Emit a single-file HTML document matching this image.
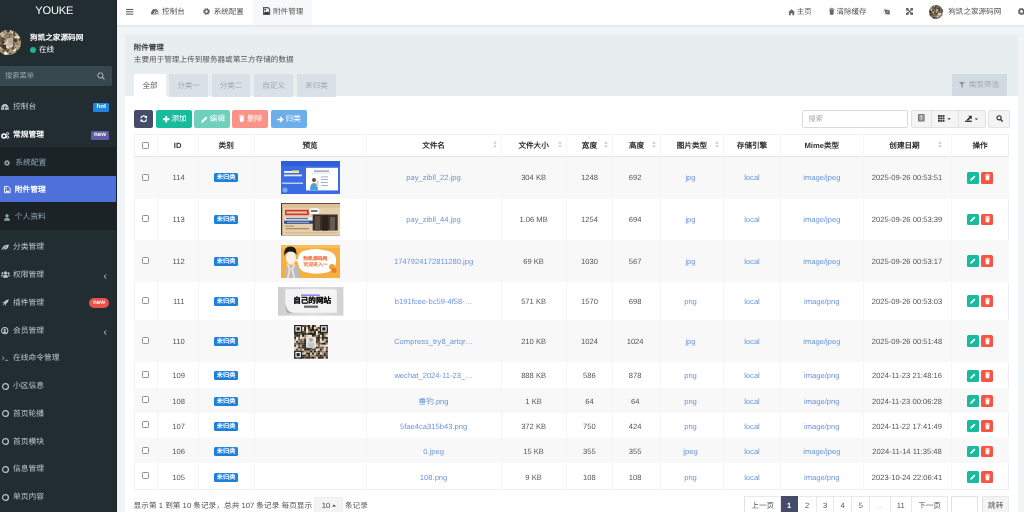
<!DOCTYPE html>
<html lang="zh-CN"><head><meta charset="utf-8"><style>
*{box-sizing:border-box;margin:0;padding:0}
html,body{width:1024px;height:512px;overflow:hidden;background:#f1f4f6;font-family:"Liberation Sans",sans-serif;color:#333;font-size:7.6px;text-rendering:geometricPrecision}
.a{position:absolute}
.t{position:absolute;white-space:nowrap;line-height:1}
svg{position:absolute;overflow:visible}
#wrap{position:absolute;left:0;top:0;width:1024px;height:512px;overflow:hidden;will-change:transform}
#sb{position:absolute;left:0;top:0;width:117px;height:512px;background:#222d32;overflow:hidden}
#hd{position:absolute;left:117px;top:0;width:907px;height:24.8px;background:#fff}
.tab{position:absolute;top:74px;height:22.5px;background:#dae1e6;color:#a3a8ac;text-align:center;line-height:23.4px;font-size:7.6px;white-space:nowrap}
.btn{position:absolute;top:110.2px;height:17.6px;border-radius:2px;color:#fff;line-height:17.6px;font-size:7.6px;white-space:nowrap}
.row{position:absolute;left:134px;width:875px;border-bottom:1px solid #ebebeb}
.c{position:absolute;top:0;height:100%;display:flex;align-items:center;justify-content:center;white-space:nowrap}
.vl{position:absolute;top:0;height:100%;width:1px;background:#f2f2f2}
.lnk{color:#6b93dc}
.lbl{display:inline-block;background:#1c80db;color:#fff;font-size:6.2px;width:23.8px;height:9px;line-height:9px;border-radius:1.5px;text-align:center;font-weight:bold}
.cb{display:inline-block;width:7.6px;height:7px;border:0.9px solid #8f8f8f;border-radius:1.3px;background:#fff;margin-left:0.4px}
.mi{position:absolute;left:0;width:117px;color:#b8c7ce;font-size:7.4px}
.mi .tx{position:absolute;left:13px;white-space:nowrap;line-height:1}
.pg{position:absolute;top:496px;height:18px;border:1px solid #e8e8e8;border-left:none;background:#fff;color:#555;text-align:center;line-height:17.6px;font-size:7.6px}
</style></head><body><div id="wrap">
<div id="sb">
<div class="t" style="left:35.2px;top:6.4px;font-size:11.1px;color:#fff;letter-spacing:-0.15px">YOUKE</div>
<svg style="left:-3.8px;top:30px" width="25" height="25" viewBox="0 0 25 25"><defs><clipPath id="avc"><circle cx="12.5" cy="12.5" r="12.5"/></clipPath></defs><g clip-path="url(#avc)"><rect width="25" height="25" fill="#a89476"/><circle cx="13.2" cy="21.2" r="1.9" fill="#a8977b"/><circle cx="3.6" cy="14.0" r="0.8" fill="#6e5c46"/><circle cx="15.4" cy="7.8" r="1.0" fill="#5b4a36"/><circle cx="10.7" cy="4.0" r="1.4" fill="#4a3a2a"/><circle cx="9.9" cy="9.4" r="1.8" fill="#8c7a60"/><circle cx="2.2" cy="11.0" r="1.0" fill="#c7b79b"/><circle cx="14.3" cy="12.0" r="1.8" fill="#e9dfcc"/><circle cx="11.4" cy="21.6" r="1.7" fill="#3f3226"/><circle cx="18.8" cy="9.1" r="1.3" fill="#6e5c46"/><circle cx="23.1" cy="7.9" r="0.8" fill="#c7b79b"/><circle cx="7.0" cy="12.7" r="1.7" fill="#3f3226"/><circle cx="17.1" cy="6.6" r="1.5" fill="#3f3226"/><circle cx="5.4" cy="10.9" r="1.9" fill="#5b4a36"/><circle cx="7.5" cy="1.6" r="2.0" fill="#d8cbb3"/><circle cx="10.5" cy="8.8" r="2.0" fill="#a8977b"/><circle cx="19.9" cy="7.5" r="1.6" fill="#5b4a36"/><circle cx="18.1" cy="12.1" r="0.9" fill="#c7b79b"/><circle cx="20.0" cy="2.6" r="1.2" fill="#c7b79b"/><circle cx="23.2" cy="17.3" r="1.2" fill="#e9dfcc"/><circle cx="13.9" cy="1.1" r="1.5" fill="#e9dfcc"/><circle cx="13.0" cy="5.5" r="1.2" fill="#6e5c46"/><circle cx="21.6" cy="4.1" r="1.1" fill="#4a3a2a"/><circle cx="13.1" cy="12.6" r="1.5" fill="#c7b79b"/><circle cx="17.1" cy="13.4" r="1.1" fill="#3f3226"/><circle cx="11.7" cy="22.5" r="1.2" fill="#a8977b"/><circle cx="23.8" cy="9.5" r="1.3" fill="#3f3226"/><circle cx="17.3" cy="7.3" r="1.6" fill="#6e5c46"/><circle cx="22.3" cy="19.9" r="1.1" fill="#4a3a2a"/><circle cx="5.7" cy="4.9" r="1.3" fill="#d8cbb3"/><circle cx="12.2" cy="18.6" r="0.8" fill="#a8977b"/><circle cx="4.7" cy="17.1" r="1.3" fill="#e9dfcc"/><circle cx="9.3" cy="10.5" r="1.4" fill="#a8977b"/><circle cx="9.6" cy="6.5" r="1.7" fill="#d8cbb3"/><circle cx="14.8" cy="12.8" r="2.0" fill="#e9dfcc"/><circle cx="12.4" cy="20.3" r="1.5" fill="#6e5c46"/><circle cx="14.5" cy="16.6" r="1.8" fill="#a8977b"/><circle cx="11.5" cy="23.3" r="1.7" fill="#c7b79b"/><circle cx="21.3" cy="14.0" r="1.2" fill="#8c7a60"/><circle cx="14.4" cy="23.3" r="1.2" fill="#5b4a36"/><circle cx="8.3" cy="3.8" r="0.9" fill="#c7b79b"/><circle cx="9.7" cy="18.3" r="1.3" fill="#5b4a36"/><circle cx="15.2" cy="9.1" r="1.7" fill="#a8977b"/><circle cx="14.3" cy="21.2" r="1.1" fill="#d8cbb3"/><circle cx="18.7" cy="18.4" r="1.2" fill="#5b4a36"/><circle cx="17.1" cy="4.8" r="1.2" fill="#d8cbb3"/><circle cx="13.8" cy="10.0" r="1.2" fill="#6e5c46"/><circle cx="16.6" cy="16.8" r="1.4" fill="#d8cbb3"/><circle cx="8.5" cy="8.1" r="1.3" fill="#6e5c46"/><circle cx="16.1" cy="10.5" r="1.4" fill="#e9dfcc"/><circle cx="17.2" cy="4.3" r="1.3" fill="#4a3a2a"/><circle cx="23.9" cy="8.8" r="0.8" fill="#5b4a36"/><circle cx="2.3" cy="15.3" r="2.0" fill="#4a3a2a"/><circle cx="1.3" cy="9.3" r="1.8" fill="#c7b79b"/><circle cx="15.9" cy="11.9" r="0.9" fill="#5b4a36"/><circle cx="20.8" cy="6.8" r="1.9" fill="#5b4a36"/><circle cx="19.8" cy="7.2" r="1.4" fill="#e9dfcc"/><circle cx="18.5" cy="18.2" r="1.6" fill="#5b4a36"/><circle cx="5.2" cy="11.4" r="0.9" fill="#6e5c46"/><circle cx="21.2" cy="21.2" r="1.4" fill="#4a3a2a"/><circle cx="13.8" cy="6.0" r="0.9" fill="#5b4a36"/><circle cx="15.2" cy="10.2" r="1.8" fill="#5b4a36"/><circle cx="22.2" cy="7.3" r="1.4" fill="#e9dfcc"/><circle cx="6.0" cy="9.4" r="1.1" fill="#d8cbb3"/><circle cx="6.3" cy="6.8" r="1.4" fill="#e9dfcc"/><circle cx="12.5" cy="12.2" r="1.7" fill="#e9dfcc"/><circle cx="14.5" cy="13.1" r="2.0" fill="#f3ede2"/><circle cx="14.3" cy="10.2" r="1.4" fill="#4a3a2a"/><circle cx="13.9" cy="14.6" r="1.6" fill="#3f3226"/><circle cx="6.7" cy="9.0" r="2.0" fill="#5b4a36"/><circle cx="9.2" cy="14.1" r="1.7" fill="#e9dfcc"/><circle cx="10.5" cy="14.4" r="0.9" fill="#8c7a60"/><circle cx="3.1" cy="14.9" r="1.3" fill="#4a3a2a"/><circle cx="15.5" cy="3.6" r="0.9" fill="#3f3226"/><circle cx="5.1" cy="4.9" r="1.3" fill="#a8977b"/><circle cx="9.8" cy="5.1" r="1.1" fill="#5b4a36"/><circle cx="11.4" cy="21.5" r="1.1" fill="#3f3226"/><circle cx="13.5" cy="13.6" r="1.2" fill="#a8977b"/><circle cx="21.2" cy="6.0" r="0.9" fill="#d8cbb3"/><circle cx="8.1" cy="1.3" r="1.8" fill="#4a3a2a"/><circle cx="7.4" cy="3.5" r="1.4" fill="#6e5c46"/><circle cx="16.4" cy="3.0" r="1.0" fill="#f3ede2"/><circle cx="12.8" cy="10.6" r="1.5" fill="#c7b79b"/><circle cx="8.7" cy="6.7" r="1.2" fill="#e9dfcc"/><circle cx="13.3" cy="11.4" r="1.6" fill="#c7b79b"/><circle cx="18.8" cy="2.1" r="1.2" fill="#6e5c46"/><circle cx="23.1" cy="19.1" r="1.4" fill="#6e5c46"/><circle cx="11.8" cy="9.3" r="1.9" fill="#c7b79b"/><circle cx="18.4" cy="14.9" r="1.0" fill="#6e5c46"/><circle cx="23.5" cy="18.3" r="1.3" fill="#5b4a36"/><circle cx="8.8" cy="1.0" r="1.2" fill="#d8cbb3"/><circle cx="7.2" cy="16.5" r="2.0" fill="#3f3226"/><circle cx="8.8" cy="16.2" r="1.8" fill="#3f3226"/><circle cx="19.7" cy="11.0" r="1.7" fill="#6e5c46"/><circle cx="8.6" cy="5.0" r="1.0" fill="#f3ede2"/><circle cx="3.0" cy="19.3" r="0.9" fill="#8c7a60"/><circle cx="12.4" cy="0.6" r="1.9" fill="#4a3a2a"/><circle cx="2.7" cy="6.6" r="1.1" fill="#8c7a60"/><circle cx="15.3" cy="21.1" r="1.9" fill="#a8977b"/><circle cx="17.6" cy="5.6" r="1.6" fill="#d8cbb3"/><circle cx="18.1" cy="5.3" r="1.5" fill="#6e5c46"/><circle cx="12.0" cy="17.5" r="1.1" fill="#e9dfcc"/><circle cx="14.1" cy="8.0" r="1.2" fill="#6e5c46"/><circle cx="7.8" cy="22.1" r="1.3" fill="#8c7a60"/><circle cx="9.2" cy="2.9" r="1.4" fill="#5b4a36"/><circle cx="18.1" cy="2.9" r="0.8" fill="#4a3a2a"/><circle cx="15.1" cy="12.4" r="1.7" fill="#3f3226"/><circle cx="13.9" cy="11.2" r="1.9" fill="#5b4a36"/><circle cx="6.1" cy="3.9" r="2.0" fill="#c7b79b"/><circle cx="15.7" cy="8.3" r="1.7" fill="#5b4a36"/><circle cx="18.6" cy="19.6" r="1.9" fill="#e9dfcc"/><circle cx="12.1" cy="24.0" r="1.0" fill="#a8977b"/><circle cx="21.7" cy="18.4" r="0.9" fill="#c7b79b"/><circle cx="15.5" cy="7.3" r="1.3" fill="#a8977b"/><circle cx="11.9" cy="6.0" r="1.2" fill="#e9dfcc"/><circle cx="5.0" cy="15.7" r="1.6" fill="#5b4a36"/><circle cx="12.1" cy="4.4" r="1.5" fill="#8c7a60"/><circle cx="16.7" cy="16.4" r="0.9" fill="#3f3226"/><circle cx="21.5" cy="4.8" r="1.4" fill="#c7b79b"/><circle cx="9.5" cy="3.1" r="1.7" fill="#a8977b"/><circle cx="9.7" cy="22.0" r="0.9" fill="#d8cbb3"/><circle cx="18.6" cy="10.3" r="1.4" fill="#6e5c46"/><circle cx="18.7" cy="17.8" r="0.9" fill="#a8977b"/><circle cx="9.7" cy="22.4" r="1.6" fill="#8c7a60"/><circle cx="12.0" cy="8.5" r="1.9" fill="#a8977b"/><circle cx="10.5" cy="9.6" r="1.0" fill="#4a3a2a"/><circle cx="7.5" cy="21.5" r="1.3" fill="#6e5c46"/><circle cx="11.1" cy="16.8" r="1.2" fill="#f3ede2"/><circle cx="13.6" cy="14.7" r="1.7" fill="#8c7a60"/><circle cx="2.4" cy="9.7" r="0.9" fill="#a8977b"/><circle cx="12.2" cy="14.6" r="0.9" fill="#8c7a60"/><circle cx="7.1" cy="12.3" r="1.2" fill="#4a3a2a"/><circle cx="8.9" cy="18.8" r="1.8" fill="#4a3a2a"/><circle cx="20.0" cy="16.0" r="1.0" fill="#c7b79b"/><circle cx="4.1" cy="7.2" r="1.7" fill="#6e5c46"/><circle cx="11.9" cy="8.0" r="1.5" fill="#5b4a36"/><circle cx="9.1" cy="6.3" r="1.5" fill="#8c7a60"/><circle cx="16.9" cy="18.2" r="1.5" fill="#5b4a36"/><circle cx="14.6" cy="16.4" r="1.2" fill="#d8cbb3"/><circle cx="9.5" cy="23.4" r="1.9" fill="#f3ede2"/><circle cx="19.2" cy="10.3" r="1.9" fill="#4a3a2a"/><rect x="10" y="8" width="7" height="9" fill="#d9d0c2" opacity="0.7"/></g></svg>
<div class="t" style="left:30.1px;top:33.8px;font-size:7.6px;color:#fff;font-weight:bold">狗凯之家源码网</div>
<div class="a" style="left:29.9px;top:46.6px;width:6.2px;height:6.2px;border-radius:50%;background:#1fb38f"></div>
<div class="t" style="left:38.9px;top:45.6px;font-size:7.6px;color:#fff">在线</div>
<div class="a" style="left:0;top:66px;width:112px;height:19.8px;background:#374850;border-radius:0 2px 2px 0"></div>
<div class="t" style="left:4.9px;top:72.2px;font-size:7.3px;color:#98a6ad">搜索菜单</div>
<svg style="left:97px;top:72.3px" width="8" height="8" viewBox="0 0 8 8"><circle cx="3.4" cy="3.4" r="2.6" fill="none" stroke="#b4bfc4" stroke-width="1"/><line x1="5.3" y1="5.3" x2="7.4" y2="7.4" stroke="#b4bfc4" stroke-width="1.1"/></svg>
<div class="a" style="left:0;top:147.2px;width:117px;height:83.2px;background:#1c2327"></div>
<div class="a" style="left:0;top:176.2px;width:117px;height:25.6px;background:#4e70db"></div>
<div class="t" style="left:12.9px;top:103.39px;font-size:7.75px;color:#b8c7ce;">控制台</div>
<svg style="left:1.4px;top:104.1px" width="7.8" height="6" viewBox="0 0 7.8 6"><path d="M0 5.8 Q0 0 3.9 0 Q7.8 0 7.8 5.8 Z" fill="#b8c7ce"/><line x1="3.3" y1="5.4" x2="4.3" y2="1.8" stroke="#222d32" stroke-width="1.1"/><circle cx="1.6" cy="3.6" r="0.5" fill="#222d32"/><circle cx="6.2" cy="3.6" r="0.5" fill="#222d32"/></svg>
<div class="t" style="left:12.9px;top:131.39px;font-size:7.75px;color:#fff;font-weight:bold;">常规管理</div>
<svg style="left:1.2px;top:131.9px" width="8.2" height="6.6" viewBox="0 0 8.2 6.6"><circle cx="2.9" cy="3.9" r="2" fill="none" stroke="#fff" stroke-width="1.5"/><circle cx="6.6" cy="1.6" r="1.1" fill="none" stroke="#fff" stroke-width="0.9"/><circle cx="6.6" cy="5.2" r="1.1" fill="none" stroke="#fff" stroke-width="0.9"/></svg>
<div class="t" style="left:15.2px;top:159.09px;font-size:7.75px;color:#8aa4af;">系统配置</div>
<svg style="left:4.2px;top:160.0px" width="6" height="6" viewBox="0 0 8 8"><circle cx="4" cy="4" r="2.3" fill="none" stroke="#8aa4af" stroke-width="2"/><circle cx="4" cy="4" r="3.4" fill="none" stroke="#8aa4af" stroke-width="1.3" stroke-dasharray="1.3 1.35"/></svg>
<div class="t" style="left:14.7px;top:185.59px;font-size:7.75px;color:#fff;font-weight:bold;">附件管理</div>
<svg style="left:3.8px;top:185.9px" width="6.6" height="7.2" viewBox="0 0 6.6 7.2"><path d="M0.45 0.45 H4.3 L6.15 2.3 V6.75 H0.45 Z" fill="none" stroke="#fff" stroke-width="0.9"/><path d="M1.1 6.2 L2.7 4.2 L3.7 5.1 L4.4 4.5 L5.5 6.2 Z" fill="#fff"/><circle cx="2.2" cy="2.6" r="0.8" fill="#fff"/></svg>
<div class="t" style="left:14.7px;top:213.39px;font-size:7.75px;color:#8aa4af;">个人资料</div>
<svg style="left:4.4px;top:213.9px" width="6" height="6.8" viewBox="0 0 6 6.8"><circle cx="3" cy="1.8" r="1.7" fill="#8aa4af"/><path d="M0 6.8 Q0.1 3.8 3 3.8 Q5.9 3.8 6 6.8 Z" fill="#8aa4af"/></svg>
<div class="t" style="left:12.9px;top:243.09px;font-size:7.75px;color:#b8c7ce;">分类管理</div>
<svg style="left:1.2px;top:243.6px" width="8" height="6.8" viewBox="0 0 8 6.8"><path d="M0.5 6.3 Q1.2 0.6 7.8 0.4 Q7.4 6.5 1.8 5.4 Z" fill="#b8c7ce"/><path d="M0.4 6.6 L5.5 2.5" stroke="#222d32" stroke-width="0.7"/></svg>
<div class="t" style="left:12.9px;top:270.89px;font-size:7.75px;color:#b8c7ce;">权限管理</div>
<svg style="left:0.8px;top:271.40000000000003px" width="9" height="6.8" viewBox="0 0 9 6.8"><circle cx="4.5" cy="1.8" r="1.6" fill="#b8c7ce"/><circle cx="1.5" cy="2.3" r="1.1" fill="#b8c7ce"/><circle cx="7.5" cy="2.3" r="1.1" fill="#b8c7ce"/><path d="M2 6.8 Q2.2 3.6 4.5 3.6 Q6.8 3.6 7 6.8Z M0 5.6 Q0.1 3.6 1.5 3.6 L2 3.8 Q1.5 4.6 1.5 5.6Z M9 5.6 Q8.9 3.6 7.5 3.6 L7 3.8 Q7.5 4.6 7.5 5.6Z" fill="#b8c7ce"/></svg>
<div class="t" style="left:12.9px;top:298.79px;font-size:7.75px;color:#b8c7ce;">插件管理</div>
<svg style="left:1.8px;top:299.2px" width="7" height="7" viewBox="0 0 8 8"><path d="M7.8 0.2 Q4 0.5 2.2 3.6 L0.4 4 L0.3 4.6 L2 4.8 L3.2 6 L3.4 7.7 L4 7.6 L4.4 5.8 Q7.5 4 7.8 0.2Z M1.6 5.6 L0.3 7.7 L2.4 6.4Z" fill="#b8c7ce"/></svg>
<div class="t" style="left:12.9px;top:326.59px;font-size:7.75px;color:#b8c7ce;">会员管理</div>
<svg style="left:1.4px;top:326.9px" width="7.4" height="7.4" viewBox="0 0 9 9"><circle cx="4.5" cy="4.5" r="3.8" fill="none" stroke="#b8c7ce" stroke-width="1.3"/><circle cx="4.5" cy="3.6" r="1.4" fill="#b8c7ce"/><path d="M2.1 7.2 Q2.6 5.3 4.5 5.3 Q6.4 5.3 6.9 7.2Z" fill="#b8c7ce"/></svg>
<div class="t" style="left:12.9px;top:354.29px;font-size:7.75px;color:#b8c7ce;">在线命令管理</div>
<svg style="left:2.2px;top:355.8px" width="7" height="5" viewBox="0 0 8 5"><path d="M0.4 0.4 L2.4 2.2 L0.4 4" fill="none" stroke="#b8c7ce" stroke-width="0.9"/><line x1="3.4" y1="4.6" x2="7" y2="4.6" stroke="#b8c7ce" stroke-width="0.8"/></svg>
<div class="t" style="left:12.9px;top:382.09px;font-size:7.75px;color:#b8c7ce;">小区信息</div>
<svg style="left:1.7px;top:382.5px" width="7" height="7" viewBox="0 0 7 7"><circle cx="3.5" cy="3.5" r="2.9" fill="none" stroke="#b8c7ce" stroke-width="1.2"/></svg>
<div class="t" style="left:12.9px;top:409.89px;font-size:7.75px;color:#b8c7ce;">首页轮播</div>
<svg style="left:1.7px;top:410.3px" width="7" height="7" viewBox="0 0 7 7"><circle cx="3.5" cy="3.5" r="2.9" fill="none" stroke="#b8c7ce" stroke-width="1.2"/></svg>
<div class="t" style="left:12.9px;top:437.59px;font-size:7.75px;color:#b8c7ce;">首页模块</div>
<svg style="left:1.7px;top:438.0px" width="7" height="7" viewBox="0 0 7 7"><circle cx="3.5" cy="3.5" r="2.9" fill="none" stroke="#b8c7ce" stroke-width="1.2"/></svg>
<div class="t" style="left:12.9px;top:465.39px;font-size:7.75px;color:#b8c7ce;">信息管理</div>
<svg style="left:1.7px;top:465.8px" width="7" height="7" viewBox="0 0 7 7"><circle cx="3.5" cy="3.5" r="2.9" fill="none" stroke="#b8c7ce" stroke-width="1.2"/></svg>
<div class="t" style="left:12.9px;top:493.19px;font-size:7.75px;color:#b8c7ce;">单页内容</div>
<svg style="left:1.7px;top:493.6px" width="7" height="7" viewBox="0 0 7 7"><circle cx="3.5" cy="3.5" r="2.9" fill="none" stroke="#b8c7ce" stroke-width="1.2"/></svg>
<div class="t" style="left:93.2px;top:103.3px;width:16px;height:8.5px;background:#1f85e0;color:#fff;font-size:6.2px;font-weight:bold;text-align:center;line-height:8.5px;border-radius:1.5px">hot</div>
<div class="t" style="left:90.7px;top:131px;width:18.5px;height:8.5px;background:#605ca8;color:#fff;font-size:6.2px;font-weight:bold;text-align:center;line-height:8.5px;border-radius:1.5px">new</div>
<div class="t" style="left:88.6px;top:298.3px;width:20.8px;height:9.4px;background:#e8524a;color:#fff;font-size:6.2px;font-weight:bold;text-align:center;line-height:9.4px;border-radius:5px">new</div>
<svg style="left:102.6px;top:273.9px" width="4" height="5" viewBox="0 0 4 5"><path d="M3.3 0.5 L1 2.5 L3.3 4.5" fill="none" stroke="#b8c7ce" stroke-width="1"/></svg>
<svg style="left:102.6px;top:329.7px" width="4" height="5" viewBox="0 0 4 5"><path d="M3.3 0.5 L1 2.5 L3.3 4.5" fill="none" stroke="#b8c7ce" stroke-width="1"/></svg>
<div class="a" style="left:116px;top:0;width:1px;height:512px;background:#1a2226"></div>
</div>
<div id="hd"></div><div class="a" style="left:117px;top:24.8px;width:907px;height:2.6px;background:linear-gradient(#dfe1e3,#eef1f3)"></div>
<svg style="left:125.8px;top:8.6px" width="7.3" height="5.6" viewBox="0 0 7.3 5.6"><path d="M0 0.45H7.3M0 2.8H7.3M0 5.15H7.3" stroke="#444" stroke-width="0.9"/></svg>
<div class="a" style="left:253.3px;top:0;width:58.4px;height:24.5px;background:#f7f8f9"></div>
<svg style="left:151.2px;top:9px" width="7.6" height="5.6" viewBox="0 0 7.6 5.6"><path d="M0 5.6 Q0 0 3.8 0 Q7.6 0 7.6 5.6 Z" fill="#666"/><line x1="2.6" y1="5.2" x2="4.6" y2="1.6" stroke="#fff" stroke-width="0.9"/><circle cx="6" cy="4.4" r="1.3" fill="#fff"/><circle cx="6" cy="4.4" r="0.7" fill="#666"/></svg>
<div class="t" style="left:162.1px;top:7.7px;font-size:7.6px;color:#555">控制台</div>
<svg style="left:203.2px;top:8.2px" width="7" height="7" viewBox="0 0 8 8"><circle cx="4" cy="4" r="2.3" fill="none" stroke="#666" stroke-width="1.8"/><circle cx="4" cy="4" r="3.3" fill="none" stroke="#666" stroke-width="1.3" stroke-dasharray="1.2 1.4"/></svg>
<div class="t" style="left:213.7px;top:7.7px;font-size:7.55px;color:#555">系统配置</div>
<svg style="left:262.6px;top:7.2px" width="7.2" height="8" viewBox="0 0 7.2 8"><path d="M0.6 0.6 H4.4 Q6.6 0.8 6.6 3 V7.4 H0.6 Z" fill="none" stroke="#5a5a5a" stroke-width="1.2"/><path d="M1.2 6.9 L1.2 5.6 L2.4 4.4 L3.4 5.4 L4.6 4.2 L6 5.6 V6.9 Z" fill="#333"/><circle cx="2.3" cy="2.6" r="0.9" fill="#333"/></svg>
<div class="t" style="left:273px;top:7.7px;font-size:7.6px;color:#555">附件管理</div>
<svg style="left:787.9px;top:8.6px" width="7.2" height="6.5" viewBox="0 0 7.2 6.5"><path d="M3.6 0.3 L7 3.3 L6.2 3.3 L6.2 6.3 L4.4 6.3 L4.4 4.3 L2.8 4.3 L2.8 6.3 L1 6.3 L1 3.3 L0.2 3.3 Z" fill="#666"/></svg>
<div class="t" style="left:796.8px;top:7.7px;font-size:7.45px;color:#555">主页</div>
<svg style="left:829px;top:8.2px" width="5.4" height="7" viewBox="0 0 5.4 7"><path d="M0 1.2 H5.4 M1.8 1 V0.3 H3.6 V1" stroke="#666" stroke-width="0.8" fill="none"/><path d="M0.6 1.8 H4.8 L4.4 6.8 H1 Z" fill="#666"/></svg>
<div class="t" style="left:836.5px;top:7.7px;font-size:7.5px;color:#555">清除缓存</div>
<svg style="left:883px;top:7.6px" width="8" height="7.4" viewBox="0 0 8 7.4"><circle cx="3.6" cy="3.8" r="3.2" fill="none" stroke="#d4d4d4" stroke-width="0.8"/><path d="M1.2 1.2 L6.6 2.4 L6.8 6.6 L2.6 6 Z" fill="#666"/><path d="M3.4 3 L5.2 3.4 L5.3 4.8 L3.6 4.6Z" fill="#aaa"/></svg>
<svg style="left:906px;top:7.9px" width="7" height="7" viewBox="0 0 7 7"><path d="M0.8 0.8 L6.2 6.2 M6.2 0.8 L0.8 6.2" stroke="#666" stroke-width="1.1"/><path d="M0 0 H2.6 V2.6 H0Z M7 0 H4.4 V2.6 H7Z M0 7 H2.6 V4.4 H0Z M7 7 H4.4 V4.4 H7Z" fill="#666"/></svg>
<svg style="left:929px;top:5.3px" width="14" height="14" viewBox="0 0 25 25"><defs><clipPath id="avc2"><circle cx="12.5" cy="12.5" r="12.5"/></clipPath></defs><g clip-path="url(#avc2)"><rect width="25" height="25" fill="#6c5f4f"/><circle cx="4.1" cy="15.1" r="1.5" fill="#4a3f34"/><circle cx="15.3" cy="8.9" r="1.7" fill="#4a3f34"/><circle cx="13.3" cy="9.6" r="1.1" fill="#a89a84"/><circle cx="1.2" cy="9.7" r="1.7" fill="#cfc3ae"/><circle cx="6.3" cy="17.2" r="1.7" fill="#5f5344"/><circle cx="13.7" cy="10.4" r="1.1" fill="#cfc3ae"/><circle cx="12.6" cy="14.0" r="1.3" fill="#4a3f34"/><circle cx="8.6" cy="10.0" r="1.7" fill="#3e342a"/><circle cx="2.7" cy="12.5" r="1.8" fill="#4a3f34"/><circle cx="5.2" cy="17.3" r="1.8" fill="#8a7a62"/><circle cx="10.4" cy="17.2" r="0.9" fill="#a89a84"/><circle cx="9.5" cy="11.2" r="2.0" fill="#8a7a62"/><circle cx="3.3" cy="20.5" r="1.2" fill="#cfc3ae"/><circle cx="14.4" cy="11.6" r="2.2" fill="#d8cfbf"/><circle cx="10.4" cy="14.1" r="1.9" fill="#3e342a"/><circle cx="12.1" cy="15.4" r="0.9" fill="#6e604e"/><circle cx="2.4" cy="18.9" r="1.2" fill="#5f5344"/><circle cx="14.4" cy="13.9" r="1.1" fill="#4a3f34"/><circle cx="5.3" cy="9.7" r="2.2" fill="#3e342a"/><circle cx="13.4" cy="5.1" r="1.1" fill="#d8cfbf"/><circle cx="8.2" cy="14.9" r="2.0" fill="#a89a84"/><circle cx="21.5" cy="11.1" r="1.2" fill="#cfc3ae"/><circle cx="3.5" cy="19.5" r="1.0" fill="#8a7a62"/><circle cx="17.1" cy="18.6" r="1.9" fill="#cfc3ae"/><circle cx="9.6" cy="17.8" r="1.0" fill="#8a7a62"/><circle cx="14.9" cy="21.7" r="1.7" fill="#cfc3ae"/><circle cx="7.1" cy="18.1" r="2.0" fill="#4a3f34"/><circle cx="17.1" cy="17.8" r="1.3" fill="#5f5344"/><circle cx="13.8" cy="21.7" r="1.1" fill="#3e342a"/><circle cx="6.5" cy="6.1" r="2.0" fill="#d8cfbf"/><circle cx="6.6" cy="8.0" r="1.0" fill="#8a7a62"/><circle cx="7.0" cy="12.1" r="1.2" fill="#d8cfbf"/><circle cx="16.6" cy="4.3" r="1.6" fill="#a89a84"/><circle cx="23.6" cy="7.2" r="1.2" fill="#5f5344"/><circle cx="1.9" cy="8.4" r="1.3" fill="#8a7a62"/><circle cx="16.7" cy="10.1" r="1.0" fill="#cfc3ae"/><circle cx="7.9" cy="15.4" r="1.1" fill="#cfc3ae"/><circle cx="6.4" cy="19.1" r="1.0" fill="#5f5344"/><circle cx="17.5" cy="18.4" r="1.8" fill="#6e604e"/><circle cx="9.2" cy="4.1" r="1.7" fill="#5f5344"/><circle cx="19.6" cy="8.8" r="1.8" fill="#6e604e"/><circle cx="13.7" cy="12.2" r="1.5" fill="#8a7a62"/><circle cx="11.7" cy="6.3" r="1.0" fill="#8a7a62"/><circle cx="2.5" cy="9.5" r="1.9" fill="#5f5344"/><circle cx="18.2" cy="9.1" r="2.1" fill="#4a3f34"/><circle cx="17.6" cy="7.1" r="2.0" fill="#cfc3ae"/><circle cx="4.0" cy="8.3" r="1.4" fill="#d8cfbf"/><circle cx="15.1" cy="12.7" r="1.7" fill="#8a7a62"/><circle cx="24.1" cy="12.0" r="1.4" fill="#6e604e"/><circle cx="11.7" cy="3.5" r="1.5" fill="#4a3f34"/><circle cx="4.4" cy="10.3" r="1.3" fill="#cfc3ae"/><circle cx="13.6" cy="13.2" r="1.5" fill="#8a7a62"/><circle cx="3.6" cy="4.7" r="2.1" fill="#a89a84"/><circle cx="9.9" cy="15.4" r="1.6" fill="#3e342a"/><circle cx="12.7" cy="5.9" r="1.5" fill="#4a3f34"/><circle cx="12.9" cy="19.8" r="1.2" fill="#a89a84"/><circle cx="2.5" cy="17.1" r="2.0" fill="#3e342a"/><circle cx="5.7" cy="18.5" r="1.2" fill="#6e604e"/><circle cx="16.9" cy="17.5" r="1.8" fill="#cfc3ae"/><circle cx="18.0" cy="10.7" r="1.0" fill="#5f5344"/><circle cx="0.8" cy="14.6" r="1.4" fill="#d8cfbf"/><circle cx="2.7" cy="11.3" r="1.3" fill="#4a3f34"/><circle cx="15.3" cy="7.4" r="1.8" fill="#cfc3ae"/><circle cx="11.2" cy="19.1" r="1.7" fill="#cfc3ae"/><circle cx="8.7" cy="15.1" r="1.2" fill="#a89a84"/><circle cx="13.8" cy="14.0" r="1.5" fill="#8a7a62"/><circle cx="5.9" cy="5.4" r="2.1" fill="#6e604e"/><circle cx="10.6" cy="8.1" r="1.2" fill="#4a3f34"/><circle cx="10.1" cy="2.2" r="1.1" fill="#cfc3ae"/><circle cx="11.6" cy="19.0" r="1.4" fill="#5f5344"/><circle cx="15.6" cy="1.1" r="1.4" fill="#8a7a62"/><circle cx="18.0" cy="8.1" r="1.5" fill="#4a3f34"/><circle cx="4.2" cy="4.1" r="1.6" fill="#d8cfbf"/><circle cx="7.7" cy="5.7" r="1.5" fill="#6e604e"/><circle cx="9.7" cy="8.6" r="1.2" fill="#8a7a62"/><circle cx="22.5" cy="5.2" r="1.6" fill="#a89a84"/><circle cx="14.1" cy="6.4" r="1.4" fill="#cfc3ae"/><circle cx="19.1" cy="16.3" r="1.9" fill="#d8cfbf"/><circle cx="11.0" cy="12.6" r="1.5" fill="#8a7a62"/><circle cx="20.9" cy="14.4" r="1.5" fill="#5f5344"/><circle cx="24.2" cy="12.5" r="2.1" fill="#4a3f34"/><circle cx="0.4" cy="13.1" r="1.9" fill="#8a7a62"/><circle cx="4.3" cy="15.8" r="1.6" fill="#5f5344"/><circle cx="17.4" cy="5.2" r="1.8" fill="#a89a84"/><circle cx="23.5" cy="9.3" r="1.3" fill="#3e342a"/><circle cx="18.0" cy="19.2" r="1.6" fill="#a89a84"/><circle cx="15.1" cy="20.7" r="1.7" fill="#cfc3ae"/><circle cx="24.6" cy="14.6" r="1.6" fill="#d8cfbf"/><circle cx="16.0" cy="12.3" r="1.8" fill="#8a7a62"/><circle cx="20.4" cy="16.0" r="2.1" fill="#d8cfbf"/><circle cx="14.8" cy="5.6" r="1.5" fill="#3e342a"/><circle cx="17.8" cy="17.9" r="1.6" fill="#4a3f34"/><circle cx="18.3" cy="17.2" r="2.1" fill="#cfc3ae"/><circle cx="19.9" cy="20.3" r="0.9" fill="#cfc3ae"/><circle cx="13.0" cy="13.2" r="1.3" fill="#a89a84"/><circle cx="6.7" cy="19.9" r="1.5" fill="#8a7a62"/><circle cx="2.6" cy="6.9" r="1.8" fill="#a89a84"/><circle cx="9.0" cy="1.5" r="1.4" fill="#cfc3ae"/><circle cx="5.2" cy="16.9" r="1.6" fill="#5f5344"/><circle cx="18.1" cy="6.0" r="1.6" fill="#3e342a"/><circle cx="18.0" cy="5.0" r="1.2" fill="#5f5344"/><circle cx="11.9" cy="1.5" r="1.3" fill="#5f5344"/><circle cx="7.8" cy="23.4" r="1.9" fill="#3e342a"/><circle cx="13.6" cy="15.4" r="1.1" fill="#3e342a"/><circle cx="18.5" cy="16.2" r="2.0" fill="#d8cfbf"/><circle cx="2.9" cy="17.6" r="1.2" fill="#5f5344"/><circle cx="4.9" cy="4.6" r="1.2" fill="#8a7a62"/><circle cx="7.6" cy="1.7" r="1.1" fill="#6e604e"/><circle cx="1.9" cy="12.1" r="1.9" fill="#3e342a"/><circle cx="11.2" cy="12.7" r="1.1" fill="#4a3f34"/></g></svg>
<div class="t" style="left:948.3px;top:7.7px;font-size:7.57px;color:#555">狗凯之家源码网</div>
<svg style="left:1017.8px;top:8.3px" width="8" height="7" viewBox="0 0 8 7"><circle cx="3.5" cy="3.5" r="2.2" fill="none" stroke="#666" stroke-width="1.6"/><circle cx="3.5" cy="3.5" r="3.1" fill="none" stroke="#666" stroke-width="1.1" stroke-dasharray="1.2 1.2"/></svg>
<div class="a" style="left:124.6px;top:33.6px;width:893px;height:490px;background:#fff"></div>
<div class="a" style="left:124.6px;top:33.6px;width:893px;height:62.4px;background:#e8edf0"></div>
<div class="t" style="left:133.7px;top:44.1px;font-size:7.55px;color:#444;font-weight:bold">附件管理</div>
<div class="t" style="left:133.8px;top:56.3px;font-size:7.62px;color:#555">主要用于管理上传到服务器或第三方存储的数据</div>
<div class="tab" style="left:134px;width:32px;background:#fff;color:#666;">全部</div>
<div class="tab" style="left:169.1px;width:38.900000000000006px;">分类一</div>
<div class="tab" style="left:211.6px;width:38.900000000000006px;">分类二</div>
<div class="tab" style="left:254.2px;width:38.80000000000001px;">自定义</div>
<div class="tab" style="left:296.8px;width:39.19999999999999px;">未归类</div>
<div class="tab" style="left:952.1px;width:54.6px;top:74.2px;height:21.8px;line-height:21.8px;background:#d2dae1;color:#a5acb2;padding-left:9px">类型筛选</div>
<svg style="left:959px;top:81.8px" width="6" height="6" viewBox="0 0 6 6"><path d="M0 0 H6 L3.7 2.6 V6 L2.3 5 V2.6 Z" fill="#8e969c"/></svg>
<div class="btn" style="left:133.8px;width:19.7px;background:#444c69"></div>
<svg style="left:139.8px;top:115.3px" width="7.5" height="7.5" viewBox="0 0 8 8"><path d="M1 3.4 A3 3 0 0 1 6.6 2.4" fill="none" stroke="#fff" stroke-width="1.3"/><path d="M7.6 0.6 L7.4 3.6 L4.6 2.7Z" fill="#fff"/><path d="M7 4.6 A3 3 0 0 1 1.4 5.6" fill="none" stroke="#fff" stroke-width="1.3"/><path d="M0.4 7.4 L0.6 4.4 L3.4 5.3Z" fill="#fff"/></svg>
<div class="btn" style="left:156px;width:35.8px;background:#18bc9c"></div>
<svg style="left:162.8px;top:115.8px" width="6.5" height="6.5" viewBox="0 0 6.5 6.5"><path d="M3.25 0 V6.5 M0 3.25 H6.5" stroke="#fff" stroke-width="1.8"/></svg>
<div class="t" style="left:171.5px;top:115.2px;font-size:7.6px;color:#fff">添加</div>
<div class="btn" style="left:194.2px;width:36.3px;background:#6fd0bc"></div>
<svg style="left:200.5px;top:115.5px" width="7" height="7" viewBox="0 0 7 7"><path d="M0.3 6.7 L0.7 4.8 L4.9 0.6 L6.4 2.1 L2.2 6.3 Z" fill="#fff"/></svg>
<div class="t" style="left:209.8px;top:115.2px;font-size:7.6px;color:#fff">编辑</div>
<div class="btn" style="left:232.4px;width:35.6px;background:#f99389"></div>
<svg style="left:239px;top:115.3px" width="5.6" height="7" viewBox="0 0 5.6 7"><path d="M0 1.2 H5.6 M1.9 1 V0.3 H3.7 V1" stroke="#fff" stroke-width="0.8" fill="none"/><path d="M0.6 1.8 H5 L4.6 6.8 H1 Z" fill="#fff"/></svg>
<div class="t" style="left:247.2px;top:115.2px;font-size:7.6px;color:#fff">删除</div>
<div class="btn" style="left:270.5px;width:36.4px;background:#6caeea"></div>
<svg style="left:277px;top:115.5px" width="7" height="7" viewBox="0 0 7 7"><path d="M0 3.5 H5 M3 1 L5.6 3.5 L3 6" stroke="#fff" stroke-width="1.6" fill="none"/></svg>
<div class="t" style="left:285.6px;top:115.2px;font-size:7.6px;color:#fff">归类</div>
<div class="a" style="left:802px;top:110.2px;width:106px;height:17.6px;border:1px solid #d9d9d9;background:#fff;border-radius:1.5px"></div>
<div class="t" style="left:808.5px;top:115.3px;font-size:7.2px;color:#aaa">搜索</div>
<div class="a" style="left:910.5px;top:110.2px;width:75.2px;height:17.6px;border:1px solid #e2e2e2;background:#f4f4f4;border-radius:2px"></div>
<div class="a" style="left:931.4px;top:110.2px;width:1px;height:17.6px;background:#e2e2e2"></div>
<div class="a" style="left:958.4px;top:110.2px;width:1px;height:17.6px;background:#e2e2e2"></div>
<div class="a" style="left:988px;top:110.2px;width:21.5px;height:17.6px;border:1px solid #e2e2e2;background:#f4f4f4;border-radius:2px"></div>
<svg style="left:918.2px;top:114.1px" width="6.6" height="7.6" viewBox="0 0 6.6 7.6"><rect x="0" y="0" width="6.6" height="7.6" rx="0.6" fill="#707070"/><rect x="0.9" y="0.9" width="4.8" height="5.8" fill="#9a9a9a"/><path d="M3.3 1.4 V6" stroke="#eee" stroke-width="0.7"/><path d="M2.2 2.6 L3.3 1.4 L4.4 2.6" stroke="#eee" stroke-width="0.6" fill="none"/></svg>
<svg style="left:938.3px;top:114.9px" width="13" height="6.8" viewBox="0 0 13 6.8"><g fill="#3a3a3a"><rect x="0" y="0" width="1.9" height="1.9"/><rect x="2.3" y="0" width="1.9" height="1.9"/><rect x="4.6" y="0" width="1.9" height="1.9"/><rect x="0" y="2.45" width="1.9" height="1.9"/><rect x="2.3" y="2.45" width="1.9" height="1.9"/><rect x="4.6" y="2.45" width="1.9" height="1.9"/><rect x="0" y="4.9" width="1.9" height="1.9"/><rect x="2.3" y="4.9" width="1.9" height="1.9"/><rect x="4.6" y="4.9" width="1.9" height="1.9"/></g><path d="M9.3 3.3 H12.8 L11.05 5Z" fill="#3a3a3a"/></svg>
<svg style="left:965.4px;top:114.6px" width="14" height="7.2" viewBox="0 0 14 7.2"><path d="M0 6.3 H6.8" stroke="#333" stroke-width="1.3"/><path d="M1.6 4.8 L4.4 2 L3.2 0.8 H6.8 V4.4 L5.6 3.2 L2.8 6Z" fill="#333"/><path d="M9.6 3.4 H13.2 L11.4 5.1Z" fill="#333"/></svg>
<svg style="left:995.6px;top:115px" width="7.4" height="6.6" viewBox="0 0 8 7.2"><circle cx="3.3" cy="3.1" r="2.3" fill="none" stroke="#333" stroke-width="1.3"/><line x1="5" y1="4.8" x2="7.2" y2="7" stroke="#333" stroke-width="1.6"/></svg>
<div class="a" style="left:134px;top:134.2px;width:875px;height:355.8px;border:1px solid #f0f0f0;background:#fff"></div>
<div class="a" style="left:134px;top:157.0px;width:875px;height:41.69999999999999px;background:#f8f8f8"></div>
<div class="a" style="left:134px;top:240.1px;width:875px;height:42.29999999999998px;background:#f8f8f8"></div>
<div class="a" style="left:134px;top:320.1px;width:875px;height:42.299999999999955px;background:#f8f8f8"></div>
<div class="a" style="left:134px;top:387.6px;width:875px;height:25.299999999999955px;background:#f8f8f8"></div>
<div class="a" style="left:134px;top:438.2px;width:875px;height:25.30000000000001px;background:#f8f8f8"></div>
<div class="a" style="left:134px;top:156.1px;width:875px;height:1px;background:#e4e4e4"></div>
<div class="a" style="left:156.5px;top:134.2px;width:1px;height:354.8px;background:#f5f5f5"></div>
<div class="a" style="left:197.8px;top:134.2px;width:1px;height:354.8px;background:#f5f5f5"></div>
<div class="a" style="left:253.5px;top:134.2px;width:1px;height:354.8px;background:#f5f5f5"></div>
<div class="a" style="left:365.7px;top:134.2px;width:1px;height:354.8px;background:#f5f5f5"></div>
<div class="a" style="left:500.5px;top:134.2px;width:1px;height:354.8px;background:#f5f5f5"></div>
<div class="a" style="left:565.7px;top:134.2px;width:1px;height:354.8px;background:#f5f5f5"></div>
<div class="a" style="left:612.2px;top:134.2px;width:1px;height:354.8px;background:#f5f5f5"></div>
<div class="a" style="left:660.1px;top:134.2px;width:1px;height:354.8px;background:#f5f5f5"></div>
<div class="a" style="left:722.9px;top:134.2px;width:1px;height:354.8px;background:#f5f5f5"></div>
<div class="a" style="left:780.1px;top:134.2px;width:1px;height:354.8px;background:#f5f5f5"></div>
<div class="a" style="left:862.5px;top:134.2px;width:1px;height:354.8px;background:#f5f5f5"></div>
<div class="a" style="left:950.5px;top:134.2px;width:1px;height:354.8px;background:#f5f5f5"></div>
<div class="c" style="left:134px;width:23px;top:134.2px;height:21.900000000000006px;font-weight:bold;color:#333;font-size:7.6px;"><span class="cb"></span></div>
<div class="c" style="left:157px;width:41.30000000000001px;top:134.2px;height:21.900000000000006px;font-weight:bold;color:#333;font-size:7.6px;">ID</div>
<div class="c" style="left:198.3px;width:55.69999999999999px;top:134.2px;height:21.900000000000006px;font-weight:bold;color:#333;font-size:7.6px;">类别</div>
<div class="c" style="left:254px;width:112.19999999999999px;top:134.2px;height:21.900000000000006px;font-weight:bold;color:#333;font-size:7.6px;">预览</div>
<div class="c" style="left:366.2px;width:134.8px;top:134.2px;height:21.900000000000006px;font-weight:bold;color:#333;font-size:7.6px;">文件名</div>
<svg style="left:492.7px;top:141.39999999999998px" width="4" height="7" viewBox="0 0 4 7"><path d="M2 0 L3.8 2.8 H0.2Z M2 7 L3.8 4.2 H0.2Z" fill="#cdcdcd"/></svg>
<div class="c" style="left:501px;width:65.20000000000005px;top:134.2px;height:21.900000000000006px;font-weight:bold;color:#333;font-size:7.6px;">文件大小</div>
<svg style="left:557.9000000000001px;top:141.39999999999998px" width="4" height="7" viewBox="0 0 4 7"><path d="M2 0 L3.8 2.8 H0.2Z M2 7 L3.8 4.2 H0.2Z" fill="#cdcdcd"/></svg>
<div class="c" style="left:566.2px;width:46.5px;top:134.2px;height:21.900000000000006px;font-weight:bold;color:#333;font-size:7.6px;">宽度</div>
<svg style="left:604.4000000000001px;top:141.39999999999998px" width="4" height="7" viewBox="0 0 4 7"><path d="M2 0 L3.8 2.8 H0.2Z M2 7 L3.8 4.2 H0.2Z" fill="#cdcdcd"/></svg>
<div class="c" style="left:612.7px;width:47.89999999999998px;top:134.2px;height:21.900000000000006px;font-weight:bold;color:#333;font-size:7.6px;">高度</div>
<svg style="left:652.3000000000001px;top:141.39999999999998px" width="4" height="7" viewBox="0 0 4 7"><path d="M2 0 L3.8 2.8 H0.2Z M2 7 L3.8 4.2 H0.2Z" fill="#cdcdcd"/></svg>
<div class="c" style="left:660.6px;width:62.799999999999955px;top:134.2px;height:21.900000000000006px;font-weight:bold;color:#333;font-size:7.6px;">图片类型</div>
<svg style="left:715.1px;top:141.39999999999998px" width="4" height="7" viewBox="0 0 4 7"><path d="M2 0 L3.8 2.8 H0.2Z M2 7 L3.8 4.2 H0.2Z" fill="#cdcdcd"/></svg>
<div class="c" style="left:723.4px;width:57.200000000000045px;top:134.2px;height:21.900000000000006px;font-weight:bold;color:#333;font-size:7.6px;">存储引擎</div>
<div class="c" style="left:780.6px;width:82.39999999999998px;top:134.2px;height:21.900000000000006px;font-weight:bold;color:#333;font-size:7.6px;">Mime类型</div>
<div class="c" style="left:863px;width:88px;top:134.2px;height:21.900000000000006px;font-weight:bold;color:#333;font-size:7.6px;padding-right:5px;">创建日期</div>
<svg style="left:938.4px;top:141.39999999999998px" width="4" height="7" viewBox="0 0 4 7"><path d="M2 0 L3.8 2.8 H0.2Z M2 7 L3.8 4.2 H0.2Z" fill="#cdcdcd"/></svg>
<div class="c" style="left:951px;width:58px;top:134.2px;height:21.900000000000006px;font-weight:bold;color:#333;font-size:7.6px;">操作</div>
<div class="c" style="left:134px;width:23px;top:157.0px;height:41.69999999999999px;padding-bottom:1.6px"><span class="cb"></span></div>
<div class="c" style="left:157px;width:41.30000000000001px;top:157.0px;height:41.69999999999999px;color:#555;padding-left:2px">114</div>
<div class="c" style="left:198.3px;width:55.69999999999999px;top:157.0px;height:41.69999999999999px;"><span class="lbl">未归类</span></div>
<svg style="left:281px;top:161px" width="59" height="33" viewBox="0 0 59 33">
<rect width="59" height="33" fill="#3a6be3"/><rect x="0" y="0" width="59" height="5" fill="#2f5fd8"/>
<rect x="25" y="6.8" width="32" height="22.6" fill="#fff"/>
<rect x="3" y="10" width="8" height="2" fill="#e8f0ff"/><rect x="11" y="9.5" width="7" height="2.5" fill="#ffe680"/><rect x="3" y="13.5" width="18" height="1.8" fill="#dde8ff"/>
<rect x="1" y="21.5" width="21" height="1.5" fill="#b8d0ff"/><circle cx="4" cy="29" r="2.6" fill="#7fa8f2"/>
<rect x="33" y="9.5" width="15" height="1.2" fill="#7a8fb8"/><rect x="31" y="11.8" width="19" height="0.6" fill="#c7d2e6"/>
<rect x="40" y="15.5" width="7" height="0.8" fill="#8aa0c8"/><rect x="40" y="18" width="7" height="0.8" fill="#8aa0c8"/><rect x="40" y="21" width="7" height="0.8" fill="#8aa0c8"/><rect x="40" y="24" width="7" height="0.8" fill="#8aa0c8"/>
<circle cx="33" cy="19" r="2" fill="#6b4a3a"/><path d="M29 29 Q29 22 33 22 Q37 22 37 29Z" fill="#4aa3d8"/><rect x="35.5" y="20" width="2" height="6" fill="#f2c9a8"/>
</svg>
<div class="c" style="left:366.2px;width:134.8px;top:157.0px;height:41.69999999999999px;"><span class="lnk">pay_zibll_22.jpg</span></div>
<div class="c" style="left:501px;width:65.20000000000005px;top:157.0px;height:41.69999999999999px;color:#555">304 KB</div>
<div class="c" style="left:566.2px;width:46.5px;top:157.0px;height:41.69999999999999px;color:#555">1248</div>
<div class="c" style="left:612.7px;width:47.89999999999998px;top:157.0px;height:41.69999999999999px;color:#555;padding-right:3px">692</div>
<div class="c" style="left:660.6px;width:62.799999999999955px;top:157.0px;height:41.69999999999999px;padding-right:3px"><span class="lnk">jpg</span></div>
<div class="c" style="left:723.4px;width:57.200000000000045px;top:157.0px;height:41.69999999999999px;"><span class="lnk">local</span></div>
<div class="c" style="left:780.6px;width:82.39999999999998px;top:157.0px;height:41.69999999999999px;"><span class="lnk">image/jpeg</span></div>
<div class="c" style="left:863px;width:88px;top:157.0px;height:41.69999999999999px;color:#555">2025-09-26 00:53:51</div>
<div class="a" style="left:967.2px;top:171.95px;width:12.1px;height:11.7px;background:#18bc9c;border-radius:1.5px"></div>
<svg style="left:970.3px;top:174.65px" width="6" height="6" viewBox="0 0 6 6"><path d="M0.2 5.8 L0.5 4.3 L4.2 0.6 L5.4 1.8 L1.7 5.5Z" fill="#fff"/></svg>
<div class="a" style="left:981.4px;top:171.95px;width:12.1px;height:11.7px;background:#f75444;border-radius:1.5px"></div>
<svg style="left:985px;top:174.45px" width="5" height="6.5" viewBox="0 0 5 6.5"><path d="M0 1.1 H5 M1.7 1 V0.3 H3.3 V1" stroke="#fff" stroke-width="0.8" fill="none"/><path d="M0.5 1.7 H4.5 L4.2 6.3 H0.8 Z" fill="#fff"/></svg>
<div class="c" style="left:134px;width:23px;top:198.7px;height:41.400000000000006px;padding-bottom:1.6px"><span class="cb"></span></div>
<div class="c" style="left:157px;width:41.30000000000001px;top:198.7px;height:41.400000000000006px;color:#555;padding-left:2px">113</div>
<div class="c" style="left:198.3px;width:55.69999999999999px;top:198.7px;height:41.400000000000006px;"><span class="lbl">未归类</span></div>
<svg style="left:281px;top:203px" width="59" height="32.5" viewBox="0 0 59 32.5">
<rect width="59" height="32.5" fill="#4a2e20"/><rect x="1.2" y="0.9" width="57.8" height="31.6" fill="#e6cfac"/>
<rect x="1.2" y="0.9" width="57.8" height="4" fill="#dcc19a"/>
<rect x="4" y="6.8" width="23.8" height="5.4" fill="#c8392a"/><rect x="5.5" y="8.4" width="20.5" height="2.2" fill="#f3b8a8"/>
<rect x="28.4" y="5.2" width="10" height="5.8" rx="2.2" fill="#fbfbfb"/><rect x="30" y="7.2" width="6.5" height="1.6" fill="#555"/>
<rect x="4" y="14" width="27.5" height="3" fill="#e9eef4"/><rect x="5" y="14.8" width="22" height="1.4" fill="#5a6f8f"/>
<rect x="3.2" y="17.7" width="28.8" height="3.1" fill="#2b4b8d"/><rect x="6" y="18.7" width="22" height="1.1" fill="#9fb4dd"/>
<rect x="31.7" y="11.5" width="25" height="16" fill="#3a302c"/><rect x="34" y="13" width="5" height="14.5" fill="#5e4c42"/><rect x="41" y="12.5" width="6" height="15" fill="#2a221f"/><rect x="49" y="14" width="5" height="13" fill="#6a5a50"/>
<rect x="4" y="22.5" width="9" height="1.3" fill="#b89e7e"/><rect x="5" y="25" width="23" height="1.3" fill="#a88c6c"/><rect x="4" y="29.3" width="52" height="1" fill="#cfb28a"/>
</svg>
<div class="c" style="left:366.2px;width:134.8px;top:198.7px;height:41.400000000000006px;"><span class="lnk">pay_zibll_44.jpg</span></div>
<div class="c" style="left:501px;width:65.20000000000005px;top:198.7px;height:41.400000000000006px;color:#555">1.06 MB</div>
<div class="c" style="left:566.2px;width:46.5px;top:198.7px;height:41.400000000000006px;color:#555">1254</div>
<div class="c" style="left:612.7px;width:47.89999999999998px;top:198.7px;height:41.400000000000006px;color:#555;padding-right:3px">694</div>
<div class="c" style="left:660.6px;width:62.799999999999955px;top:198.7px;height:41.400000000000006px;padding-right:3px"><span class="lnk">jpg</span></div>
<div class="c" style="left:723.4px;width:57.200000000000045px;top:198.7px;height:41.400000000000006px;"><span class="lnk">local</span></div>
<div class="c" style="left:780.6px;width:82.39999999999998px;top:198.7px;height:41.400000000000006px;"><span class="lnk">image/jpeg</span></div>
<div class="c" style="left:863px;width:88px;top:198.7px;height:41.400000000000006px;color:#555">2025-09-26 00:53:39</div>
<div class="a" style="left:967.2px;top:213.49999999999997px;width:12.1px;height:11.7px;background:#18bc9c;border-radius:1.5px"></div>
<svg style="left:970.3px;top:216.2px" width="6" height="6" viewBox="0 0 6 6"><path d="M0.2 5.8 L0.5 4.3 L4.2 0.6 L5.4 1.8 L1.7 5.5Z" fill="#fff"/></svg>
<div class="a" style="left:981.4px;top:213.49999999999997px;width:12.1px;height:11.7px;background:#f75444;border-radius:1.5px"></div>
<svg style="left:985px;top:215.99999999999997px" width="5" height="6.5" viewBox="0 0 5 6.5"><path d="M0 1.1 H5 M1.7 1 V0.3 H3.3 V1" stroke="#fff" stroke-width="0.8" fill="none"/><path d="M0.5 1.7 H4.5 L4.2 6.3 H0.8 Z" fill="#fff"/></svg>
<div class="c" style="left:134px;width:23px;top:240.1px;height:42.29999999999998px;padding-bottom:1.6px"><span class="cb"></span></div>
<div class="c" style="left:157px;width:41.30000000000001px;top:240.1px;height:42.29999999999998px;color:#555;padding-left:2px">112</div>
<div class="c" style="left:198.3px;width:55.69999999999999px;top:240.1px;height:42.29999999999998px;"><span class="lbl">未归类</span></div>
<svg style="left:281px;top:244.6px" width="59" height="33" viewBox="0 0 59 33">
<rect width="59" height="33" fill="#f4b041"/><rect x="0" y="0" width="59" height="3" fill="#f6bf5c"/>
<path d="M17 16 Q16 6 27 5 Q34 3 42 5 Q55 6 55 15 Q56 26 43 28 Q33 30 24 27 Q17 25 17 16Z" fill="#fff"/>
<path d="M17 15 L13 13 L18 19Z" fill="#fff"/>
<text x="22.3" y="14.8" font-size="4.8" fill="#ee7448" stroke="#ee7448" stroke-width="0.25" style="font-family:'Liberation Sans'">狗凯源码网</text><text x="22.5" y="20.6" font-size="4.8" fill="#f08a58" stroke="#f08a58" stroke-width="0.25" style="font-family:'Liberation Sans'">欢迎进入一</text>
<circle cx="51" cy="22" r="3" fill="#f0a030"/><circle cx="53" cy="25.5" r="2.5" fill="#ee7a2a"/>
<path d="M4.5 33 L4 24 Q6 20 10.5 20 Q16 20 18 24 L18.6 33Z" fill="#b8bcbf"/>
<ellipse cx="10" cy="13" rx="5" ry="6.8" fill="#fbf0e8"/><path d="M3.2 11 Q2.5 1.6 9.5 1.6 Q16 1.6 15.6 10 Q14 6.5 9.5 6.5 Q5 6.5 3.2 11Z" fill="#1a1a1a"/>
<path d="M6.5 19 L8.8 24 L6.8 33 M13.5 19 L11.2 24 L13.2 33" stroke="#f6e2d2" stroke-width="1.8" fill="none"/>
</svg>
<div class="c" style="left:366.2px;width:134.8px;top:240.1px;height:42.29999999999998px;"><span class="lnk">1747924172811280.jpg</span></div>
<div class="c" style="left:501px;width:65.20000000000005px;top:240.1px;height:42.29999999999998px;color:#555">69 KB</div>
<div class="c" style="left:566.2px;width:46.5px;top:240.1px;height:42.29999999999998px;color:#555">1030</div>
<div class="c" style="left:612.7px;width:47.89999999999998px;top:240.1px;height:42.29999999999998px;color:#555;padding-right:3px">567</div>
<div class="c" style="left:660.6px;width:62.799999999999955px;top:240.1px;height:42.29999999999998px;padding-right:3px"><span class="lnk">jpg</span></div>
<div class="c" style="left:723.4px;width:57.200000000000045px;top:240.1px;height:42.29999999999998px;"><span class="lnk">local</span></div>
<div class="c" style="left:780.6px;width:82.39999999999998px;top:240.1px;height:42.29999999999998px;"><span class="lnk">image/jpeg</span></div>
<div class="c" style="left:863px;width:88px;top:240.1px;height:42.29999999999998px;color:#555">2025-09-26 00:53:17</div>
<div class="a" style="left:967.2px;top:255.35px;width:12.1px;height:11.7px;background:#18bc9c;border-radius:1.5px"></div>
<svg style="left:970.3px;top:258.05px" width="6" height="6" viewBox="0 0 6 6"><path d="M0.2 5.8 L0.5 4.3 L4.2 0.6 L5.4 1.8 L1.7 5.5Z" fill="#fff"/></svg>
<div class="a" style="left:981.4px;top:255.35px;width:12.1px;height:11.7px;background:#f75444;border-radius:1.5px"></div>
<svg style="left:985px;top:257.85px" width="5" height="6.5" viewBox="0 0 5 6.5"><path d="M0 1.1 H5 M1.7 1 V0.3 H3.3 V1" stroke="#fff" stroke-width="0.8" fill="none"/><path d="M0.5 1.7 H4.5 L4.2 6.3 H0.8 Z" fill="#fff"/></svg>
<div class="c" style="left:134px;width:23px;top:282.4px;height:37.700000000000045px;padding-bottom:1.6px"><span class="cb"></span></div>
<div class="c" style="left:157px;width:41.30000000000001px;top:282.4px;height:37.700000000000045px;color:#555;padding-left:2px">111</div>
<div class="c" style="left:198.3px;width:55.69999999999999px;top:282.4px;height:37.700000000000045px;"><span class="lbl">未归类</span></div>
<svg style="left:277.6px;top:286.8px" width="65.4" height="28.7" viewBox="0 0 65.4 28.7">
<defs><linearGradient id="g111" x1="0" x2="1"><stop offset="0" stop-color="#cfcfcf"/><stop offset="0.5" stop-color="#dedede"/><stop offset="1" stop-color="#d2d2d2"/></linearGradient></defs>
<rect width="65.4" height="28.7" fill="url(#g111)"/>
<path d="M7.3 2.2 H57 Q58.9 2.2 58.9 4 V25.7 H13 Q7.3 25 7.3 19Z" fill="#f3f3f3"/>
<path d="M7.3 17 Q8.5 24.5 15 25.7 L10 26.5 Q6.5 23 7.3 17Z" fill="#b0b0b0"/>
<rect x="23" y="7.4" width="18.8" height="1.6" fill="#8f86e8"/>
<text x="15.2" y="16.3" font-size="7.6" fill="#111" stroke="#111" stroke-width="0.6" style="font-family:'Liberation Sans'">自己的网站</text>
<rect x="26" y="18.6" width="14" height="2.2" fill="#666"/>
<circle cx="53" cy="4.5" r="1.2" fill="#fff"/>
</svg>
<div class="c" style="left:366.2px;width:134.8px;top:282.4px;height:37.700000000000045px;"><span class="lnk">b191fcee-bc59-4f58-…</span></div>
<div class="c" style="left:501px;width:65.20000000000005px;top:282.4px;height:37.700000000000045px;color:#555">571 KB</div>
<div class="c" style="left:566.2px;width:46.5px;top:282.4px;height:37.700000000000045px;color:#555">1570</div>
<div class="c" style="left:612.7px;width:47.89999999999998px;top:282.4px;height:37.700000000000045px;color:#555;padding-right:3px">698</div>
<div class="c" style="left:660.6px;width:62.799999999999955px;top:282.4px;height:37.700000000000045px;padding-right:3px"><span class="lnk">png</span></div>
<div class="c" style="left:723.4px;width:57.200000000000045px;top:282.4px;height:37.700000000000045px;"><span class="lnk">local</span></div>
<div class="c" style="left:780.6px;width:82.39999999999998px;top:282.4px;height:37.700000000000045px;"><span class="lnk">image/png</span></div>
<div class="c" style="left:863px;width:88px;top:282.4px;height:37.700000000000045px;color:#555">2025-09-26 00:53:03</div>
<div class="a" style="left:967.2px;top:295.35px;width:12.1px;height:11.7px;background:#18bc9c;border-radius:1.5px"></div>
<svg style="left:970.3px;top:298.05px" width="6" height="6" viewBox="0 0 6 6"><path d="M0.2 5.8 L0.5 4.3 L4.2 0.6 L5.4 1.8 L1.7 5.5Z" fill="#fff"/></svg>
<div class="a" style="left:981.4px;top:295.35px;width:12.1px;height:11.7px;background:#f75444;border-radius:1.5px"></div>
<svg style="left:985px;top:297.85px" width="5" height="6.5" viewBox="0 0 5 6.5"><path d="M0 1.1 H5 M1.7 1 V0.3 H3.3 V1" stroke="#fff" stroke-width="0.8" fill="none"/><path d="M0.5 1.7 H4.5 L4.2 6.3 H0.8 Z" fill="#fff"/></svg>
<div class="c" style="left:134px;width:23px;top:320.1px;height:42.299999999999955px;padding-bottom:1.6px"><span class="cb"></span></div>
<div class="c" style="left:157px;width:41.30000000000001px;top:320.1px;height:42.299999999999955px;color:#555;padding-left:2px">110</div>
<div class="c" style="left:198.3px;width:55.69999999999999px;top:320.1px;height:42.299999999999955px;"><span class="lbl">未归类</span></div>
<svg style="left:293.6px;top:324.5px" width="34" height="33.6" viewBox="0 0 34 34"><rect x="0.00" y="0.00" width="2.05" height="2.05" fill="#7a6650"/><rect x="2.00" y="0.00" width="2.05" height="2.05" fill="#a89070"/><rect x="4.00" y="0.00" width="2.05" height="2.05" fill="#efe9dd"/><rect x="6.00" y="0.00" width="2.05" height="2.05" fill="#2e2620"/><rect x="8.00" y="0.00" width="2.05" height="2.05" fill="#5e4e3a"/><rect x="10.00" y="0.00" width="2.05" height="2.05" fill="#5e4e3a"/><rect x="12.00" y="0.00" width="2.05" height="2.05" fill="#7a6650"/><rect x="14.00" y="0.00" width="2.05" height="2.05" fill="#2e2620"/><rect x="16.00" y="0.00" width="2.05" height="2.05" fill="#d8ccb0"/><rect x="18.00" y="0.00" width="2.05" height="2.05" fill="#2e2620"/><rect x="20.00" y="0.00" width="2.05" height="2.05" fill="#5e4e3a"/><rect x="22.00" y="0.00" width="2.05" height="2.05" fill="#efe9dd"/><rect x="24.00" y="0.00" width="2.05" height="2.05" fill="#efe9dd"/><rect x="26.00" y="0.00" width="2.05" height="2.05" fill="#5e4e3a"/><rect x="28.00" y="0.00" width="2.05" height="2.05" fill="#d8ccb0"/><rect x="30.00" y="0.00" width="2.05" height="2.05" fill="#5e4e3a"/><rect x="32.00" y="0.00" width="2.05" height="2.05" fill="#efe9dd"/><rect x="0.00" y="2.00" width="2.05" height="2.05" fill="#2e2620"/><rect x="2.00" y="2.00" width="2.05" height="2.05" fill="#5e4e3a"/><rect x="4.00" y="2.00" width="2.05" height="2.05" fill="#d8ccb0"/><rect x="6.00" y="2.00" width="2.05" height="2.05" fill="#2e2620"/><rect x="8.00" y="2.00" width="2.05" height="2.05" fill="#efe9dd"/><rect x="10.00" y="2.00" width="2.05" height="2.05" fill="#2e2620"/><rect x="12.00" y="2.00" width="2.05" height="2.05" fill="#d8ccb0"/><rect x="14.00" y="2.00" width="2.05" height="2.05" fill="#2e2620"/><rect x="16.00" y="2.00" width="2.05" height="2.05" fill="#a89070"/><rect x="18.00" y="2.00" width="2.05" height="2.05" fill="#221c18"/><rect x="20.00" y="2.00" width="2.05" height="2.05" fill="#efe9dd"/><rect x="22.00" y="2.00" width="2.05" height="2.05" fill="#a89070"/><rect x="24.00" y="2.00" width="2.05" height="2.05" fill="#5e4e3a"/><rect x="26.00" y="2.00" width="2.05" height="2.05" fill="#221c18"/><rect x="28.00" y="2.00" width="2.05" height="2.05" fill="#a89070"/><rect x="30.00" y="2.00" width="2.05" height="2.05" fill="#5e4e3a"/><rect x="32.00" y="2.00" width="2.05" height="2.05" fill="#d8ccb0"/><rect x="0.00" y="4.00" width="2.05" height="2.05" fill="#7a6650"/><rect x="2.00" y="4.00" width="2.05" height="2.05" fill="#5e4e3a"/><rect x="4.00" y="4.00" width="2.05" height="2.05" fill="#5e4e3a"/><rect x="6.00" y="4.00" width="2.05" height="2.05" fill="#2e2620"/><rect x="8.00" y="4.00" width="2.05" height="2.05" fill="#d8ccb0"/><rect x="10.00" y="4.00" width="2.05" height="2.05" fill="#2a2420"/><rect x="12.00" y="4.00" width="2.05" height="2.05" fill="#efe9dd"/><rect x="14.00" y="4.00" width="2.05" height="2.05" fill="#7a6650"/><rect x="16.00" y="4.00" width="2.05" height="2.05" fill="#2a2420"/><rect x="18.00" y="4.00" width="2.05" height="2.05" fill="#2a2420"/><rect x="20.00" y="4.00" width="2.05" height="2.05" fill="#7a6650"/><rect x="22.00" y="4.00" width="2.05" height="2.05" fill="#221c18"/><rect x="24.00" y="4.00" width="2.05" height="2.05" fill="#d8ccb0"/><rect x="26.00" y="4.00" width="2.05" height="2.05" fill="#a89070"/><rect x="28.00" y="4.00" width="2.05" height="2.05" fill="#d8ccb0"/><rect x="30.00" y="4.00" width="2.05" height="2.05" fill="#5e4e3a"/><rect x="32.00" y="4.00" width="2.05" height="2.05" fill="#221c18"/><rect x="0.00" y="6.00" width="2.05" height="2.05" fill="#2a2420"/><rect x="2.00" y="6.00" width="2.05" height="2.05" fill="#7a6650"/><rect x="4.00" y="6.00" width="2.05" height="2.05" fill="#2a2420"/><rect x="6.00" y="6.00" width="2.05" height="2.05" fill="#221c18"/><rect x="8.00" y="6.00" width="2.05" height="2.05" fill="#5e4e3a"/><rect x="10.00" y="6.00" width="2.05" height="2.05" fill="#5e4e3a"/><rect x="12.00" y="6.00" width="2.05" height="2.05" fill="#efe9dd"/><rect x="14.00" y="6.00" width="2.05" height="2.05" fill="#a89070"/><rect x="16.00" y="6.00" width="2.05" height="2.05" fill="#7a6650"/><rect x="18.00" y="6.00" width="2.05" height="2.05" fill="#a89070"/><rect x="20.00" y="6.00" width="2.05" height="2.05" fill="#2a2420"/><rect x="22.00" y="6.00" width="2.05" height="2.05" fill="#efe9dd"/><rect x="24.00" y="6.00" width="2.05" height="2.05" fill="#2e2620"/><rect x="26.00" y="6.00" width="2.05" height="2.05" fill="#5e4e3a"/><rect x="28.00" y="6.00" width="2.05" height="2.05" fill="#7a6650"/><rect x="30.00" y="6.00" width="2.05" height="2.05" fill="#7a6650"/><rect x="32.00" y="6.00" width="2.05" height="2.05" fill="#7a6650"/><rect x="0.00" y="8.00" width="2.05" height="2.05" fill="#2a2420"/><rect x="2.00" y="8.00" width="2.05" height="2.05" fill="#2a2420"/><rect x="4.00" y="8.00" width="2.05" height="2.05" fill="#5e4e3a"/><rect x="6.00" y="8.00" width="2.05" height="2.05" fill="#5e4e3a"/><rect x="8.00" y="8.00" width="2.05" height="2.05" fill="#221c18"/><rect x="10.00" y="8.00" width="2.05" height="2.05" fill="#2a2420"/><rect x="12.00" y="8.00" width="2.05" height="2.05" fill="#5e4e3a"/><rect x="14.00" y="8.00" width="2.05" height="2.05" fill="#2e2620"/><rect x="16.00" y="8.00" width="2.05" height="2.05" fill="#221c18"/><rect x="18.00" y="8.00" width="2.05" height="2.05" fill="#2a2420"/><rect x="20.00" y="8.00" width="2.05" height="2.05" fill="#221c18"/><rect x="22.00" y="8.00" width="2.05" height="2.05" fill="#efe9dd"/><rect x="24.00" y="8.00" width="2.05" height="2.05" fill="#7a6650"/><rect x="26.00" y="8.00" width="2.05" height="2.05" fill="#2e2620"/><rect x="28.00" y="8.00" width="2.05" height="2.05" fill="#2a2420"/><rect x="30.00" y="8.00" width="2.05" height="2.05" fill="#7a6650"/><rect x="32.00" y="8.00" width="2.05" height="2.05" fill="#a89070"/><rect x="0.00" y="10.00" width="2.05" height="2.05" fill="#5e4e3a"/><rect x="2.00" y="10.00" width="2.05" height="2.05" fill="#2a2420"/><rect x="4.00" y="10.00" width="2.05" height="2.05" fill="#2e2620"/><rect x="6.00" y="10.00" width="2.05" height="2.05" fill="#d8ccb0"/><rect x="8.00" y="10.00" width="2.05" height="2.05" fill="#221c18"/><rect x="10.00" y="10.00" width="2.05" height="2.05" fill="#a89070"/><rect x="12.00" y="10.00" width="2.05" height="2.05" fill="#d8ccb0"/><rect x="14.00" y="10.00" width="2.05" height="2.05" fill="#efe9dd"/><rect x="16.00" y="10.00" width="2.05" height="2.05" fill="#efe9dd"/><rect x="18.00" y="10.00" width="2.05" height="2.05" fill="#2a2420"/><rect x="20.00" y="10.00" width="2.05" height="2.05" fill="#5e4e3a"/><rect x="22.00" y="10.00" width="2.05" height="2.05" fill="#a89070"/><rect x="24.00" y="10.00" width="2.05" height="2.05" fill="#2a2420"/><rect x="26.00" y="10.00" width="2.05" height="2.05" fill="#efe9dd"/><rect x="28.00" y="10.00" width="2.05" height="2.05" fill="#221c18"/><rect x="30.00" y="10.00" width="2.05" height="2.05" fill="#a89070"/><rect x="32.00" y="10.00" width="2.05" height="2.05" fill="#efe9dd"/><rect x="0.00" y="12.00" width="2.05" height="2.05" fill="#221c18"/><rect x="2.00" y="12.00" width="2.05" height="2.05" fill="#efe9dd"/><rect x="4.00" y="12.00" width="2.05" height="2.05" fill="#7a6650"/><rect x="6.00" y="12.00" width="2.05" height="2.05" fill="#efe9dd"/><rect x="8.00" y="12.00" width="2.05" height="2.05" fill="#d8ccb0"/><rect x="10.00" y="12.00" width="2.05" height="2.05" fill="#a89070"/><rect x="12.00" y="12.00" width="2.05" height="2.05" fill="#5e4e3a"/><rect x="14.00" y="12.00" width="2.05" height="2.05" fill="#a89070"/><rect x="16.00" y="12.00" width="2.05" height="2.05" fill="#a89070"/><rect x="18.00" y="12.00" width="2.05" height="2.05" fill="#d8ccb0"/><rect x="20.00" y="12.00" width="2.05" height="2.05" fill="#d8ccb0"/><rect x="22.00" y="12.00" width="2.05" height="2.05" fill="#2e2620"/><rect x="24.00" y="12.00" width="2.05" height="2.05" fill="#2a2420"/><rect x="26.00" y="12.00" width="2.05" height="2.05" fill="#a89070"/><rect x="28.00" y="12.00" width="2.05" height="2.05" fill="#221c18"/><rect x="30.00" y="12.00" width="2.05" height="2.05" fill="#221c18"/><rect x="32.00" y="12.00" width="2.05" height="2.05" fill="#2e2620"/><rect x="0.00" y="14.00" width="2.05" height="2.05" fill="#a89070"/><rect x="2.00" y="14.00" width="2.05" height="2.05" fill="#efe9dd"/><rect x="4.00" y="14.00" width="2.05" height="2.05" fill="#7a6650"/><rect x="6.00" y="14.00" width="2.05" height="2.05" fill="#7a6650"/><rect x="8.00" y="14.00" width="2.05" height="2.05" fill="#a89070"/><rect x="10.00" y="14.00" width="2.05" height="2.05" fill="#2e2620"/><rect x="12.00" y="14.00" width="2.05" height="2.05" fill="#2a2420"/><rect x="14.00" y="14.00" width="2.05" height="2.05" fill="#efe9dd"/><rect x="16.00" y="14.00" width="2.05" height="2.05" fill="#efe9dd"/><rect x="18.00" y="14.00" width="2.05" height="2.05" fill="#efe9dd"/><rect x="20.00" y="14.00" width="2.05" height="2.05" fill="#efe9dd"/><rect x="22.00" y="14.00" width="2.05" height="2.05" fill="#5e4e3a"/><rect x="24.00" y="14.00" width="2.05" height="2.05" fill="#2a2420"/><rect x="26.00" y="14.00" width="2.05" height="2.05" fill="#efe9dd"/><rect x="28.00" y="14.00" width="2.05" height="2.05" fill="#2e2620"/><rect x="30.00" y="14.00" width="2.05" height="2.05" fill="#d8ccb0"/><rect x="32.00" y="14.00" width="2.05" height="2.05" fill="#5e4e3a"/><rect x="0.00" y="16.00" width="2.05" height="2.05" fill="#d8ccb0"/><rect x="2.00" y="16.00" width="2.05" height="2.05" fill="#2a2420"/><rect x="4.00" y="16.00" width="2.05" height="2.05" fill="#a89070"/><rect x="6.00" y="16.00" width="2.05" height="2.05" fill="#5e4e3a"/><rect x="8.00" y="16.00" width="2.05" height="2.05" fill="#7a6650"/><rect x="10.00" y="16.00" width="2.05" height="2.05" fill="#2e2620"/><rect x="12.00" y="16.00" width="2.05" height="2.05" fill="#5e4e3a"/><rect x="14.00" y="16.00" width="2.05" height="2.05" fill="#2e2620"/><rect x="16.00" y="16.00" width="2.05" height="2.05" fill="#a89070"/><rect x="18.00" y="16.00" width="2.05" height="2.05" fill="#5e4e3a"/><rect x="20.00" y="16.00" width="2.05" height="2.05" fill="#7a6650"/><rect x="22.00" y="16.00" width="2.05" height="2.05" fill="#2e2620"/><rect x="24.00" y="16.00" width="2.05" height="2.05" fill="#5e4e3a"/><rect x="26.00" y="16.00" width="2.05" height="2.05" fill="#d8ccb0"/><rect x="28.00" y="16.00" width="2.05" height="2.05" fill="#efe9dd"/><rect x="30.00" y="16.00" width="2.05" height="2.05" fill="#a89070"/><rect x="32.00" y="16.00" width="2.05" height="2.05" fill="#221c18"/><rect x="0.00" y="18.00" width="2.05" height="2.05" fill="#7a6650"/><rect x="2.00" y="18.00" width="2.05" height="2.05" fill="#7a6650"/><rect x="4.00" y="18.00" width="2.05" height="2.05" fill="#2a2420"/><rect x="6.00" y="18.00" width="2.05" height="2.05" fill="#5e4e3a"/><rect x="8.00" y="18.00" width="2.05" height="2.05" fill="#5e4e3a"/><rect x="10.00" y="18.00" width="2.05" height="2.05" fill="#2a2420"/><rect x="12.00" y="18.00" width="2.05" height="2.05" fill="#2a2420"/><rect x="14.00" y="18.00" width="2.05" height="2.05" fill="#2a2420"/><rect x="16.00" y="18.00" width="2.05" height="2.05" fill="#2a2420"/><rect x="18.00" y="18.00" width="2.05" height="2.05" fill="#221c18"/><rect x="20.00" y="18.00" width="2.05" height="2.05" fill="#5e4e3a"/><rect x="22.00" y="18.00" width="2.05" height="2.05" fill="#a89070"/><rect x="24.00" y="18.00" width="2.05" height="2.05" fill="#5e4e3a"/><rect x="26.00" y="18.00" width="2.05" height="2.05" fill="#7a6650"/><rect x="28.00" y="18.00" width="2.05" height="2.05" fill="#221c18"/><rect x="30.00" y="18.00" width="2.05" height="2.05" fill="#2a2420"/><rect x="32.00" y="18.00" width="2.05" height="2.05" fill="#a89070"/><rect x="0.00" y="20.00" width="2.05" height="2.05" fill="#2e2620"/><rect x="2.00" y="20.00" width="2.05" height="2.05" fill="#d8ccb0"/><rect x="4.00" y="20.00" width="2.05" height="2.05" fill="#7a6650"/><rect x="6.00" y="20.00" width="2.05" height="2.05" fill="#a89070"/><rect x="8.00" y="20.00" width="2.05" height="2.05" fill="#2e2620"/><rect x="10.00" y="20.00" width="2.05" height="2.05" fill="#221c18"/><rect x="12.00" y="20.00" width="2.05" height="2.05" fill="#5e4e3a"/><rect x="14.00" y="20.00" width="2.05" height="2.05" fill="#221c18"/><rect x="16.00" y="20.00" width="2.05" height="2.05" fill="#7a6650"/><rect x="18.00" y="20.00" width="2.05" height="2.05" fill="#a89070"/><rect x="20.00" y="20.00" width="2.05" height="2.05" fill="#7a6650"/><rect x="22.00" y="20.00" width="2.05" height="2.05" fill="#d8ccb0"/><rect x="24.00" y="20.00" width="2.05" height="2.05" fill="#7a6650"/><rect x="26.00" y="20.00" width="2.05" height="2.05" fill="#d8ccb0"/><rect x="28.00" y="20.00" width="2.05" height="2.05" fill="#d8ccb0"/><rect x="30.00" y="20.00" width="2.05" height="2.05" fill="#d8ccb0"/><rect x="32.00" y="20.00" width="2.05" height="2.05" fill="#efe9dd"/><rect x="0.00" y="22.00" width="2.05" height="2.05" fill="#d8ccb0"/><rect x="2.00" y="22.00" width="2.05" height="2.05" fill="#d8ccb0"/><rect x="4.00" y="22.00" width="2.05" height="2.05" fill="#2a2420"/><rect x="6.00" y="22.00" width="2.05" height="2.05" fill="#7a6650"/><rect x="8.00" y="22.00" width="2.05" height="2.05" fill="#2e2620"/><rect x="10.00" y="22.00" width="2.05" height="2.05" fill="#2e2620"/><rect x="12.00" y="22.00" width="2.05" height="2.05" fill="#221c18"/><rect x="14.00" y="22.00" width="2.05" height="2.05" fill="#2a2420"/><rect x="16.00" y="22.00" width="2.05" height="2.05" fill="#221c18"/><rect x="18.00" y="22.00" width="2.05" height="2.05" fill="#d8ccb0"/><rect x="20.00" y="22.00" width="2.05" height="2.05" fill="#7a6650"/><rect x="22.00" y="22.00" width="2.05" height="2.05" fill="#2a2420"/><rect x="24.00" y="22.00" width="2.05" height="2.05" fill="#7a6650"/><rect x="26.00" y="22.00" width="2.05" height="2.05" fill="#7a6650"/><rect x="28.00" y="22.00" width="2.05" height="2.05" fill="#5e4e3a"/><rect x="30.00" y="22.00" width="2.05" height="2.05" fill="#d8ccb0"/><rect x="32.00" y="22.00" width="2.05" height="2.05" fill="#5e4e3a"/><rect x="0.00" y="24.00" width="2.05" height="2.05" fill="#d8ccb0"/><rect x="2.00" y="24.00" width="2.05" height="2.05" fill="#2a2420"/><rect x="4.00" y="24.00" width="2.05" height="2.05" fill="#d8ccb0"/><rect x="6.00" y="24.00" width="2.05" height="2.05" fill="#7a6650"/><rect x="8.00" y="24.00" width="2.05" height="2.05" fill="#d8ccb0"/><rect x="10.00" y="24.00" width="2.05" height="2.05" fill="#2a2420"/><rect x="12.00" y="24.00" width="2.05" height="2.05" fill="#2e2620"/><rect x="14.00" y="24.00" width="2.05" height="2.05" fill="#2a2420"/><rect x="16.00" y="24.00" width="2.05" height="2.05" fill="#7a6650"/><rect x="18.00" y="24.00" width="2.05" height="2.05" fill="#5e4e3a"/><rect x="20.00" y="24.00" width="2.05" height="2.05" fill="#5e4e3a"/><rect x="22.00" y="24.00" width="2.05" height="2.05" fill="#efe9dd"/><rect x="24.00" y="24.00" width="2.05" height="2.05" fill="#d8ccb0"/><rect x="26.00" y="24.00" width="2.05" height="2.05" fill="#2a2420"/><rect x="28.00" y="24.00" width="2.05" height="2.05" fill="#a89070"/><rect x="30.00" y="24.00" width="2.05" height="2.05" fill="#efe9dd"/><rect x="32.00" y="24.00" width="2.05" height="2.05" fill="#7a6650"/><rect x="0.00" y="26.00" width="2.05" height="2.05" fill="#5e4e3a"/><rect x="2.00" y="26.00" width="2.05" height="2.05" fill="#efe9dd"/><rect x="4.00" y="26.00" width="2.05" height="2.05" fill="#2a2420"/><rect x="6.00" y="26.00" width="2.05" height="2.05" fill="#efe9dd"/><rect x="8.00" y="26.00" width="2.05" height="2.05" fill="#5e4e3a"/><rect x="10.00" y="26.00" width="2.05" height="2.05" fill="#a89070"/><rect x="12.00" y="26.00" width="2.05" height="2.05" fill="#a89070"/><rect x="14.00" y="26.00" width="2.05" height="2.05" fill="#a89070"/><rect x="16.00" y="26.00" width="2.05" height="2.05" fill="#2e2620"/><rect x="18.00" y="26.00" width="2.05" height="2.05" fill="#a89070"/><rect x="20.00" y="26.00" width="2.05" height="2.05" fill="#2a2420"/><rect x="22.00" y="26.00" width="2.05" height="2.05" fill="#a89070"/><rect x="24.00" y="26.00" width="2.05" height="2.05" fill="#2a2420"/><rect x="26.00" y="26.00" width="2.05" height="2.05" fill="#7a6650"/><rect x="28.00" y="26.00" width="2.05" height="2.05" fill="#a89070"/><rect x="30.00" y="26.00" width="2.05" height="2.05" fill="#a89070"/><rect x="32.00" y="26.00" width="2.05" height="2.05" fill="#2e2620"/><rect x="0.00" y="28.00" width="2.05" height="2.05" fill="#2e2620"/><rect x="2.00" y="28.00" width="2.05" height="2.05" fill="#5e4e3a"/><rect x="4.00" y="28.00" width="2.05" height="2.05" fill="#a89070"/><rect x="6.00" y="28.00" width="2.05" height="2.05" fill="#efe9dd"/><rect x="8.00" y="28.00" width="2.05" height="2.05" fill="#d8ccb0"/><rect x="10.00" y="28.00" width="2.05" height="2.05" fill="#d8ccb0"/><rect x="12.00" y="28.00" width="2.05" height="2.05" fill="#2e2620"/><rect x="14.00" y="28.00" width="2.05" height="2.05" fill="#221c18"/><rect x="16.00" y="28.00" width="2.05" height="2.05" fill="#d8ccb0"/><rect x="18.00" y="28.00" width="2.05" height="2.05" fill="#221c18"/><rect x="20.00" y="28.00" width="2.05" height="2.05" fill="#d8ccb0"/><rect x="22.00" y="28.00" width="2.05" height="2.05" fill="#7a6650"/><rect x="24.00" y="28.00" width="2.05" height="2.05" fill="#221c18"/><rect x="26.00" y="28.00" width="2.05" height="2.05" fill="#efe9dd"/><rect x="28.00" y="28.00" width="2.05" height="2.05" fill="#a89070"/><rect x="30.00" y="28.00" width="2.05" height="2.05" fill="#2e2620"/><rect x="32.00" y="28.00" width="2.05" height="2.05" fill="#7a6650"/><rect x="0.00" y="30.00" width="2.05" height="2.05" fill="#2a2420"/><rect x="2.00" y="30.00" width="2.05" height="2.05" fill="#efe9dd"/><rect x="4.00" y="30.00" width="2.05" height="2.05" fill="#a89070"/><rect x="6.00" y="30.00" width="2.05" height="2.05" fill="#a89070"/><rect x="8.00" y="30.00" width="2.05" height="2.05" fill="#2e2620"/><rect x="10.00" y="30.00" width="2.05" height="2.05" fill="#2a2420"/><rect x="12.00" y="30.00" width="2.05" height="2.05" fill="#a89070"/><rect x="14.00" y="30.00" width="2.05" height="2.05" fill="#2e2620"/><rect x="16.00" y="30.00" width="2.05" height="2.05" fill="#a89070"/><rect x="18.00" y="30.00" width="2.05" height="2.05" fill="#a89070"/><rect x="20.00" y="30.00" width="2.05" height="2.05" fill="#a89070"/><rect x="22.00" y="30.00" width="2.05" height="2.05" fill="#2a2420"/><rect x="24.00" y="30.00" width="2.05" height="2.05" fill="#5e4e3a"/><rect x="26.00" y="30.00" width="2.05" height="2.05" fill="#2e2620"/><rect x="28.00" y="30.00" width="2.05" height="2.05" fill="#7a6650"/><rect x="30.00" y="30.00" width="2.05" height="2.05" fill="#2a2420"/><rect x="32.00" y="30.00" width="2.05" height="2.05" fill="#5e4e3a"/><rect x="0.00" y="32.00" width="2.05" height="2.05" fill="#2e2620"/><rect x="2.00" y="32.00" width="2.05" height="2.05" fill="#d8ccb0"/><rect x="4.00" y="32.00" width="2.05" height="2.05" fill="#d8ccb0"/><rect x="6.00" y="32.00" width="2.05" height="2.05" fill="#221c18"/><rect x="8.00" y="32.00" width="2.05" height="2.05" fill="#2e2620"/><rect x="10.00" y="32.00" width="2.05" height="2.05" fill="#5e4e3a"/><rect x="12.00" y="32.00" width="2.05" height="2.05" fill="#2a2420"/><rect x="14.00" y="32.00" width="2.05" height="2.05" fill="#2e2620"/><rect x="16.00" y="32.00" width="2.05" height="2.05" fill="#5e4e3a"/><rect x="18.00" y="32.00" width="2.05" height="2.05" fill="#2a2420"/><rect x="20.00" y="32.00" width="2.05" height="2.05" fill="#7a6650"/><rect x="22.00" y="32.00" width="2.05" height="2.05" fill="#d8ccb0"/><rect x="24.00" y="32.00" width="2.05" height="2.05" fill="#221c18"/><rect x="26.00" y="32.00" width="2.05" height="2.05" fill="#2a2420"/><rect x="28.00" y="32.00" width="2.05" height="2.05" fill="#2a2420"/><rect x="30.00" y="32.00" width="2.05" height="2.05" fill="#d8ccb0"/><rect x="32.00" y="32.00" width="2.05" height="2.05" fill="#221c18"/><rect x="0" y="0" width="8" height="8" fill="#222"/><rect x="1.2" y="1.2" width="5.6" height="5.6" fill="#eee"/><rect x="2.4" y="2.4" width="3.2" height="3.2" fill="#222"/><rect x="26" y="0" width="8" height="8" fill="#222"/><rect x="27.2" y="1.2" width="5.6" height="5.6" fill="#eee"/><rect x="28.4" y="2.4" width="3.2" height="3.2" fill="#222"/><rect x="0" y="26" width="8" height="8" fill="#222"/><rect x="1.2" y="27.2" width="5.6" height="5.6" fill="#eee"/><rect x="2.4" y="28.4" width="3.2" height="3.2" fill="#222"/>
<rect x="12" y="12" width="10" height="11" fill="#e8e4e0"/><circle cx="17" cy="15" r="2.2" fill="#b8a890"/><rect x="14" y="18" width="6" height="5" fill="#c0c4cc"/></svg>
<div class="c" style="left:366.2px;width:134.8px;top:320.1px;height:42.299999999999955px;"><span class="lnk">Compress_try8_artqr…</span></div>
<div class="c" style="left:501px;width:65.20000000000005px;top:320.1px;height:42.299999999999955px;color:#555">210 KB</div>
<div class="c" style="left:566.2px;width:46.5px;top:320.1px;height:42.299999999999955px;color:#555">1024</div>
<div class="c" style="left:612.7px;width:47.89999999999998px;top:320.1px;height:42.299999999999955px;color:#555;padding-right:3px">1024</div>
<div class="c" style="left:660.6px;width:62.799999999999955px;top:320.1px;height:42.299999999999955px;padding-right:3px"><span class="lnk">jpg</span></div>
<div class="c" style="left:723.4px;width:57.200000000000045px;top:320.1px;height:42.299999999999955px;"><span class="lnk">local</span></div>
<div class="c" style="left:780.6px;width:82.39999999999998px;top:320.1px;height:42.299999999999955px;"><span class="lnk">image/jpeg</span></div>
<div class="c" style="left:863px;width:88px;top:320.1px;height:42.299999999999955px;color:#555">2025-09-26 00:51:48</div>
<div class="a" style="left:967.2px;top:335.35px;width:12.1px;height:11.7px;background:#18bc9c;border-radius:1.5px"></div>
<svg style="left:970.3px;top:338.05px" width="6" height="6" viewBox="0 0 6 6"><path d="M0.2 5.8 L0.5 4.3 L4.2 0.6 L5.4 1.8 L1.7 5.5Z" fill="#fff"/></svg>
<div class="a" style="left:981.4px;top:335.35px;width:12.1px;height:11.7px;background:#f75444;border-radius:1.5px"></div>
<svg style="left:985px;top:337.85px" width="5" height="6.5" viewBox="0 0 5 6.5"><path d="M0 1.1 H5 M1.7 1 V0.3 H3.3 V1" stroke="#fff" stroke-width="0.8" fill="none"/><path d="M0.5 1.7 H4.5 L4.2 6.3 H0.8 Z" fill="#fff"/></svg>
<div class="c" style="left:134px;width:23px;top:362.3px;height:25.30000000000001px;padding-bottom:1.6px"><span class="cb"></span></div>
<div class="c" style="left:157px;width:41.30000000000001px;top:363.3px;height:25.30000000000001px;color:#555;padding-left:2px">109</div>
<div class="c" style="left:198.3px;width:55.69999999999999px;top:363.3px;height:25.30000000000001px;"><span class="lbl">未归类</span></div>
<div class="c" style="left:366.2px;width:134.8px;top:363.3px;height:25.30000000000001px;"><span class="lnk">wechat_2024-11-23_…</span></div>
<div class="c" style="left:501px;width:65.20000000000005px;top:363.3px;height:25.30000000000001px;color:#555">888 KB</div>
<div class="c" style="left:566.2px;width:46.5px;top:363.3px;height:25.30000000000001px;color:#555">586</div>
<div class="c" style="left:612.7px;width:47.89999999999998px;top:363.3px;height:25.30000000000001px;color:#555;padding-right:3px">878</div>
<div class="c" style="left:660.6px;width:62.799999999999955px;top:363.3px;height:25.30000000000001px;padding-right:3px"><span class="lnk">png</span></div>
<div class="c" style="left:723.4px;width:57.200000000000045px;top:363.3px;height:25.30000000000001px;"><span class="lnk">local</span></div>
<div class="c" style="left:780.6px;width:82.39999999999998px;top:363.3px;height:25.30000000000001px;"><span class="lnk">image/png</span></div>
<div class="c" style="left:863px;width:88px;top:363.3px;height:25.30000000000001px;color:#555">2024-11-23 21:48:16</div>
<div class="a" style="left:967.2px;top:369.8500000000001px;width:12.1px;height:11.7px;background:#18bc9c;border-radius:1.5px"></div>
<svg style="left:970.3px;top:372.55000000000007px" width="6" height="6" viewBox="0 0 6 6"><path d="M0.2 5.8 L0.5 4.3 L4.2 0.6 L5.4 1.8 L1.7 5.5Z" fill="#fff"/></svg>
<div class="a" style="left:981.4px;top:369.8500000000001px;width:12.1px;height:11.7px;background:#f75444;border-radius:1.5px"></div>
<svg style="left:985px;top:372.3500000000001px" width="5" height="6.5" viewBox="0 0 5 6.5"><path d="M0 1.1 H5 M1.7 1 V0.3 H3.3 V1" stroke="#fff" stroke-width="0.8" fill="none"/><path d="M0.5 1.7 H4.5 L4.2 6.3 H0.8 Z" fill="#fff"/></svg>
<div class="c" style="left:134px;width:23px;top:387.6px;height:25.299999999999955px;padding-bottom:1.6px"><span class="cb"></span></div>
<div class="c" style="left:157px;width:41.30000000000001px;top:388.6px;height:25.299999999999955px;color:#555;padding-left:2px">108</div>
<div class="c" style="left:198.3px;width:55.69999999999999px;top:388.6px;height:25.299999999999955px;"><span class="lbl">未归类</span></div>
<div class="c" style="left:366.2px;width:134.8px;top:388.6px;height:25.299999999999955px;"><span class="lnk">垂钓.png</span></div>
<div class="c" style="left:501px;width:65.20000000000005px;top:388.6px;height:25.299999999999955px;color:#555">1 KB</div>
<div class="c" style="left:566.2px;width:46.5px;top:388.6px;height:25.299999999999955px;color:#555">64</div>
<div class="c" style="left:612.7px;width:47.89999999999998px;top:388.6px;height:25.299999999999955px;color:#555;padding-right:3px">64</div>
<div class="c" style="left:660.6px;width:62.799999999999955px;top:388.6px;height:25.299999999999955px;padding-right:3px"><span class="lnk">png</span></div>
<div class="c" style="left:723.4px;width:57.200000000000045px;top:388.6px;height:25.299999999999955px;"><span class="lnk">local</span></div>
<div class="c" style="left:780.6px;width:82.39999999999998px;top:388.6px;height:25.299999999999955px;"><span class="lnk">image/png</span></div>
<div class="c" style="left:863px;width:88px;top:388.6px;height:25.299999999999955px;color:#555">2024-11-23 00:06:28</div>
<div class="a" style="left:967.2px;top:395.15000000000003px;width:12.1px;height:11.7px;background:#18bc9c;border-radius:1.5px"></div>
<svg style="left:970.3px;top:397.85px" width="6" height="6" viewBox="0 0 6 6"><path d="M0.2 5.8 L0.5 4.3 L4.2 0.6 L5.4 1.8 L1.7 5.5Z" fill="#fff"/></svg>
<div class="a" style="left:981.4px;top:395.15000000000003px;width:12.1px;height:11.7px;background:#f75444;border-radius:1.5px"></div>
<svg style="left:985px;top:397.65000000000003px" width="5" height="6.5" viewBox="0 0 5 6.5"><path d="M0 1.1 H5 M1.7 1 V0.3 H3.3 V1" stroke="#fff" stroke-width="0.8" fill="none"/><path d="M0.5 1.7 H4.5 L4.2 6.3 H0.8 Z" fill="#fff"/></svg>
<div class="c" style="left:134px;width:23px;top:412.9px;height:25.30000000000001px;padding-bottom:1.6px"><span class="cb"></span></div>
<div class="c" style="left:157px;width:41.30000000000001px;top:413.9px;height:25.30000000000001px;color:#555;padding-left:2px">107</div>
<div class="c" style="left:198.3px;width:55.69999999999999px;top:413.9px;height:25.30000000000001px;"><span class="lbl">未归类</span></div>
<div class="c" style="left:366.2px;width:134.8px;top:413.9px;height:25.30000000000001px;"><span class="lnk">5fae4ca315b43.png</span></div>
<div class="c" style="left:501px;width:65.20000000000005px;top:413.9px;height:25.30000000000001px;color:#555">372 KB</div>
<div class="c" style="left:566.2px;width:46.5px;top:413.9px;height:25.30000000000001px;color:#555">750</div>
<div class="c" style="left:612.7px;width:47.89999999999998px;top:413.9px;height:25.30000000000001px;color:#555;padding-right:3px">424</div>
<div class="c" style="left:660.6px;width:62.799999999999955px;top:413.9px;height:25.30000000000001px;padding-right:3px"><span class="lnk">png</span></div>
<div class="c" style="left:723.4px;width:57.200000000000045px;top:413.9px;height:25.30000000000001px;"><span class="lnk">local</span></div>
<div class="c" style="left:780.6px;width:82.39999999999998px;top:413.9px;height:25.30000000000001px;"><span class="lnk">image/png</span></div>
<div class="c" style="left:863px;width:88px;top:413.9px;height:25.30000000000001px;color:#555">2024-11-22 17:41:49</div>
<div class="a" style="left:967.2px;top:420.45px;width:12.1px;height:11.7px;background:#18bc9c;border-radius:1.5px"></div>
<svg style="left:970.3px;top:423.15px" width="6" height="6" viewBox="0 0 6 6"><path d="M0.2 5.8 L0.5 4.3 L4.2 0.6 L5.4 1.8 L1.7 5.5Z" fill="#fff"/></svg>
<div class="a" style="left:981.4px;top:420.45px;width:12.1px;height:11.7px;background:#f75444;border-radius:1.5px"></div>
<svg style="left:985px;top:422.95px" width="5" height="6.5" viewBox="0 0 5 6.5"><path d="M0 1.1 H5 M1.7 1 V0.3 H3.3 V1" stroke="#fff" stroke-width="0.8" fill="none"/><path d="M0.5 1.7 H4.5 L4.2 6.3 H0.8 Z" fill="#fff"/></svg>
<div class="c" style="left:134px;width:23px;top:438.2px;height:25.30000000000001px;padding-bottom:1.6px"><span class="cb"></span></div>
<div class="c" style="left:157px;width:41.30000000000001px;top:439.2px;height:25.30000000000001px;color:#555;padding-left:2px">106</div>
<div class="c" style="left:198.3px;width:55.69999999999999px;top:439.2px;height:25.30000000000001px;"><span class="lbl">未归类</span></div>
<div class="c" style="left:366.2px;width:134.8px;top:439.2px;height:25.30000000000001px;"><span class="lnk">0.jpeg</span></div>
<div class="c" style="left:501px;width:65.20000000000005px;top:439.2px;height:25.30000000000001px;color:#555">15 KB</div>
<div class="c" style="left:566.2px;width:46.5px;top:439.2px;height:25.30000000000001px;color:#555">355</div>
<div class="c" style="left:612.7px;width:47.89999999999998px;top:439.2px;height:25.30000000000001px;color:#555;padding-right:3px">355</div>
<div class="c" style="left:660.6px;width:62.799999999999955px;top:439.2px;height:25.30000000000001px;padding-right:3px"><span class="lnk">jpeg</span></div>
<div class="c" style="left:723.4px;width:57.200000000000045px;top:439.2px;height:25.30000000000001px;"><span class="lnk">local</span></div>
<div class="c" style="left:780.6px;width:82.39999999999998px;top:439.2px;height:25.30000000000001px;"><span class="lnk">image/jpeg</span></div>
<div class="c" style="left:863px;width:88px;top:439.2px;height:25.30000000000001px;color:#555">2024-11-14 11:35:48</div>
<div class="a" style="left:967.2px;top:445.75000000000006px;width:12.1px;height:11.7px;background:#18bc9c;border-radius:1.5px"></div>
<svg style="left:970.3px;top:448.45000000000005px" width="6" height="6" viewBox="0 0 6 6"><path d="M0.2 5.8 L0.5 4.3 L4.2 0.6 L5.4 1.8 L1.7 5.5Z" fill="#fff"/></svg>
<div class="a" style="left:981.4px;top:445.75000000000006px;width:12.1px;height:11.7px;background:#f75444;border-radius:1.5px"></div>
<svg style="left:985px;top:448.25000000000006px" width="5" height="6.5" viewBox="0 0 5 6.5"><path d="M0 1.1 H5 M1.7 1 V0.3 H3.3 V1" stroke="#fff" stroke-width="0.8" fill="none"/><path d="M0.5 1.7 H4.5 L4.2 6.3 H0.8 Z" fill="#fff"/></svg>
<div class="c" style="left:134px;width:23px;top:463.5px;height:25.5px;padding-bottom:1.6px"><span class="cb"></span></div>
<div class="c" style="left:157px;width:41.30000000000001px;top:464.5px;height:25.5px;color:#555;padding-left:2px">105</div>
<div class="c" style="left:198.3px;width:55.69999999999999px;top:464.5px;height:25.5px;"><span class="lbl">未归类</span></div>
<div class="c" style="left:366.2px;width:134.8px;top:464.5px;height:25.5px;"><span class="lnk">108.png</span></div>
<div class="c" style="left:501px;width:65.20000000000005px;top:464.5px;height:25.5px;color:#555">9 KB</div>
<div class="c" style="left:566.2px;width:46.5px;top:464.5px;height:25.5px;color:#555">108</div>
<div class="c" style="left:612.7px;width:47.89999999999998px;top:464.5px;height:25.5px;color:#555;padding-right:3px">108</div>
<div class="c" style="left:660.6px;width:62.799999999999955px;top:464.5px;height:25.5px;padding-right:3px"><span class="lnk">png</span></div>
<div class="c" style="left:723.4px;width:57.200000000000045px;top:464.5px;height:25.5px;"><span class="lnk">local</span></div>
<div class="c" style="left:780.6px;width:82.39999999999998px;top:464.5px;height:25.5px;"><span class="lnk">image/png</span></div>
<div class="c" style="left:863px;width:88px;top:464.5px;height:25.5px;color:#555">2023-10-24 22:06:41</div>
<div class="a" style="left:967.2px;top:471.15000000000003px;width:12.1px;height:11.7px;background:#18bc9c;border-radius:1.5px"></div>
<svg style="left:970.3px;top:473.85px" width="6" height="6" viewBox="0 0 6 6"><path d="M0.2 5.8 L0.5 4.3 L4.2 0.6 L5.4 1.8 L1.7 5.5Z" fill="#fff"/></svg>
<div class="a" style="left:981.4px;top:471.15000000000003px;width:12.1px;height:11.7px;background:#f75444;border-radius:1.5px"></div>
<svg style="left:985px;top:473.65000000000003px" width="5" height="6.5" viewBox="0 0 5 6.5"><path d="M0 1.1 H5 M1.7 1 V0.3 H3.3 V1" stroke="#fff" stroke-width="0.8" fill="none"/><path d="M0.5 1.7 H4.5 L4.2 6.3 H0.8 Z" fill="#fff"/></svg>
<div class="t" style="left:133.6px;top:502.1px;font-size:7.68px;color:#555">显示第 1 到第 10 条记录，总共 107 条记录 每页显示</div>
<div class="a" style="left:314.4px;top:497.3px;width:28.5px;height:18px;background:#f4f4f4;border:1px solid #ececec;border-radius:1px"></div>
<div class="t" style="left:321.8px;top:502.3px;font-size:7.6px;color:#444">10</div>
<svg style="left:331.5px;top:503.6px" width="4" height="3" viewBox="0 0 4 3"><path d="M0 2.6 H4 L2 0.4Z" fill="#444"/></svg>
<div class="t" style="left:345px;top:502.1px;font-size:7.6px;color:#555">条记录</div>
<div class="pg" style="left:744.4px;width:36.60000000000002px;border-left:1px solid #e2e2e2;">上一页</div>
<div class="pg" style="left:781px;width:17.399999999999977px;background:#444c69;color:#fff;border-color:#444c69;font-weight:bold;">1</div>
<div class="pg" style="left:798.4px;width:18.300000000000068px;">2</div>
<div class="pg" style="left:816.7px;width:17.699999999999932px;">3</div>
<div class="pg" style="left:834.4px;width:17.700000000000045px;">4</div>
<div class="pg" style="left:852.1px;width:18.299999999999955px;">5</div>
<div class="pg" style="left:870.4px;width:20.300000000000068px;color:#ccc;">...</div>
<div class="pg" style="left:890.7px;width:21.09999999999991px;">11</div>
<div class="pg" style="left:911.8px;width:36.5px;">下一页</div>
<div class="a" style="left:951px;top:496px;width:27.4px;height:18px;border:1px solid #e2e2e2;background:#fff"></div>
<div class="pg" style="left:982px;width:27.4px;border-left:1px solid #e2e2e2;background:#f4f4f4;color:#555;border-radius:2px">跳转</div>
</div></body></html>
